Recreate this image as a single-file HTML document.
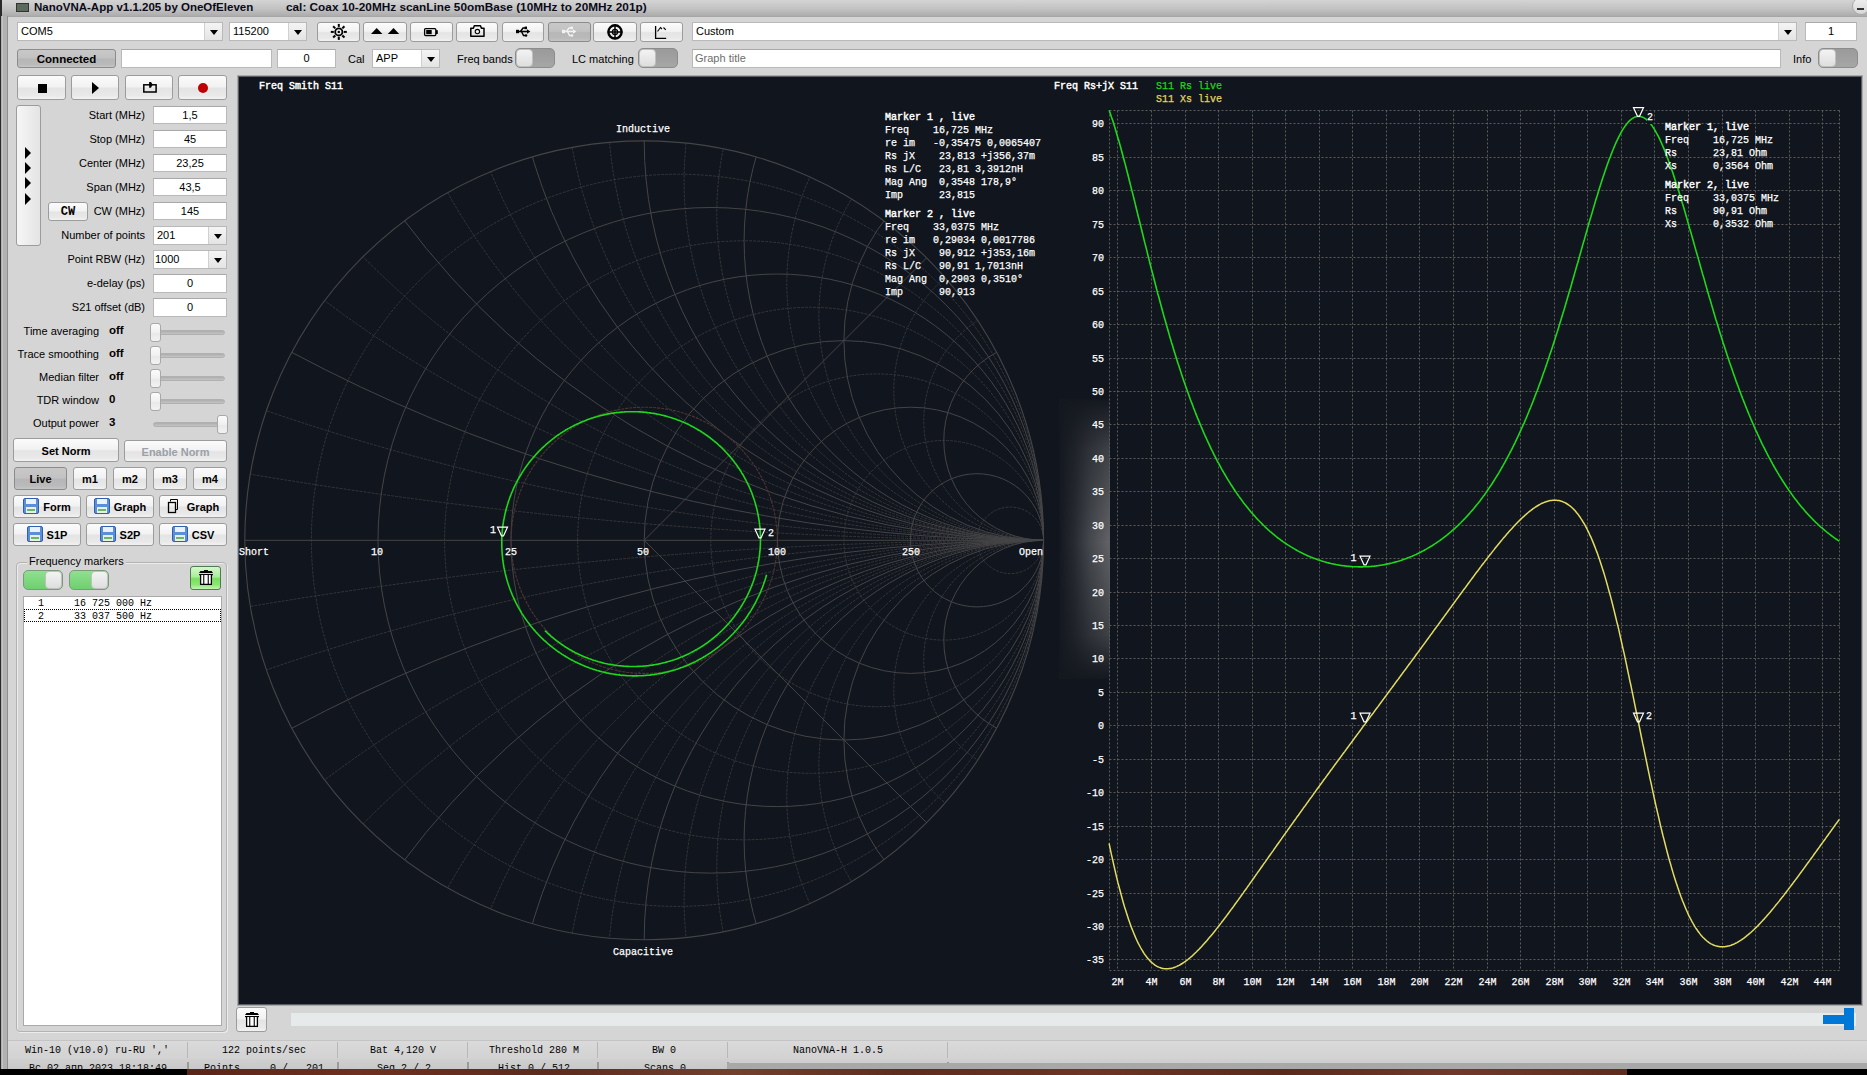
<!DOCTYPE html><html><head><meta charset="utf-8"><style>
*{box-sizing:border-box;margin:0;padding:0}
html,body{width:1867px;height:1075px;overflow:hidden;background:#000}
body{position:relative;font-family:"Liberation Sans",sans-serif;font-size:11px;color:#000}
.a{position:absolute}
.mono{font-family:"Liberation Mono",monospace}
.ct{-webkit-text-stroke:0.25px currentColor}
.btn{position:absolute;border:1px solid #9c9c9c;border-radius:3px;background:linear-gradient(#fbfbfb,#f2f2f2 46%,#e4e4e4 54%,#e9e9e9 85%,#f2f2f2);text-align:center;font-weight:bold;color:#000;padding-top:1px}
.btnp{position:absolute;border:1px solid #8c8c8c;border-radius:3px;background:linear-gradient(#c8c8c8,#c2c2c2 46%,#b6b6b6 54%,#bababa 85%,#c6c6c6);text-align:center;font-weight:bold;padding-top:1px}
.ed{position:absolute;background:#fff;border:1px solid #b9b9b9;border-top-color:#a8a8a8}
.cb{position:absolute;background:#fff;border:1px solid #b9b9b9}
.cb .dd{position:absolute;right:0;top:0;bottom:0;width:18px;border-left:1px solid #d0d0d0;background:linear-gradient(#f4f4f4,#e4e4e4)}
.cb .dd:after{content:"";position:absolute;left:5px;top:7px;border-left:4px solid transparent;border-right:4px solid transparent;border-top:5px solid #000}
.lbl{position:absolute;white-space:nowrap}
.tg{position:absolute;border:1px solid #8c8c8c;border-radius:5px;background:linear-gradient(#9a9a9a,#a6a6a6)}
.tg .k{position:absolute;left:0;top:0;bottom:0;width:46%;border-radius:4px;background:linear-gradient(#f3f3f3,#dedede);border:1px solid #c0c0c0}
.sl .tr{position:absolute;height:4px;border-radius:2px;background:#c4c4c4;border:1px solid #b8b8b8}
.thumb{position:absolute;border:1px solid #a8a8a8;border-radius:3px;background:linear-gradient(90deg,#f8f8f8,#e6e6e6)}
</style></head><body><div class="a" style="left:0px;top:0px;width:1867px;height:1075px;background:#000"></div>
<div class="a" style="left:187px;top:1068px;width:1440px;height:7px;background:linear-gradient(90deg,#6a2a1c,#7a3422 30%,#6b2b1d 60%,#7c3a26)"></div>
<div class="a" style="left:0px;top:0px;width:1867px;height:1069px;background:#d5d5d5"></div>
<div class="a" style="left:0px;top:0px;width:2px;height:1069px;background:#2a2a2a"></div>
<div class="a" style="left:1px;top:16px;width:6px;height:1053px;background:#b1b1b1"></div>
<div class="a" style="left:2px;top:16px;width:1px;height:1053px;background:#c4c4c4"></div>
<div class="a" style="left:2px;top:0px;width:1865px;height:16px;background:linear-gradient(#d4d4d4,#c0c0c0 60%,#acacac)"></div>
<div class="a" style="left:7px;top:16px;width:1860px;height:1px;background:#a6a6a6"></div>
<div class="a" style="left:7px;top:16px;width:1px;height:1053px;background:#8e8e8e"></div>
<div class="a" style="left:16px;top:3px;width:13px;height:9px;background:#5c6a5c;border:1px solid #333"></div>
<div class="lbl" style="left:34px;top:-1px;font-size:11.5px;font-weight:bold;color:#0a0a18;line-height:16px">NanoVNA-App v1.1.205 by OneOfEleven</div>
<div class="lbl" style="left:286px;top:-1px;font-size:11.8px;font-weight:bold;color:#0a0a18;line-height:16px">cal: Coax 10-20MHz scanLine 50omBase (10MHz to 20MHz 201p)</div>
<div class="a" style="left:1852px;top:-3px;width:18px;height:18px;border-radius:9px;background:linear-gradient(#f0f0f0,#d8d8d8);border:1px solid #aaa"></div>
<div class="a" style="left:1857px;top:8px;width:7px;height:2px;background:#333"></div>
<div class="cb" style="left:17px;top:22px;width:206px;height:19px;"><div class="lbl" style="left:3px;top:0;line-height:17px">COM5</div><div class="dd" style="width:18px"></div></div>
<div class="cb" style="left:229px;top:22px;width:78px;height:19px;"><div class="lbl" style="left:3px;top:0;line-height:17px">115200</div><div class="dd" style="width:18px"></div></div>
<div class="btn" style="left:317px;top:22px;width:43px;height:20px;line-height:18px;"></div>
<div class="btn" style="left:363px;top:22px;width:44px;height:20px;line-height:18px;"></div>
<div class="btn" style="left:410px;top:22px;width:43px;height:20px;line-height:18px;"></div>
<div class="btn" style="left:456px;top:22px;width:42px;height:20px;line-height:18px;"></div>
<div class="btn" style="left:502px;top:22px;width:42px;height:20px;line-height:18px;"></div>
<div class="btnp" style="left:548px;top:22px;width:43px;height:20px;line-height:18px;"></div>
<div class="btn" style="left:593px;top:22px;width:44px;height:20px;line-height:18px;"></div>
<div class="btn" style="left:640px;top:22px;width:43px;height:20px;line-height:18px;"></div>
<svg class="a" style="left:0;top:0" width="700" height="50"><g transform="translate(338.8,31.9)" stroke="#000" fill="none"><circle r="3.6" stroke-width="1.8"/><circle r="1.2" fill="#000" stroke="none"/><line x1="0" y1="-5" x2="0" y2="-8" stroke-width="2" transform="rotate(0)"/><line x1="0" y1="-5" x2="0" y2="-8" stroke-width="2" transform="rotate(45)"/><line x1="0" y1="-5" x2="0" y2="-8" stroke-width="2" transform="rotate(90)"/><line x1="0" y1="-5" x2="0" y2="-8" stroke-width="2" transform="rotate(135)"/><line x1="0" y1="-5" x2="0" y2="-8" stroke-width="2" transform="rotate(180)"/><line x1="0" y1="-5" x2="0" y2="-8" stroke-width="2" transform="rotate(225)"/><line x1="0" y1="-5" x2="0" y2="-8" stroke-width="2" transform="rotate(270)"/><line x1="0" y1="-5" x2="0" y2="-8" stroke-width="2" transform="rotate(315)"/></g><path d="M371 33.9L376.7 27.9L382.4 33.9Z M387.8 33.9L393.5 27.9L399.2 33.9Z" fill="#000"/><rect x="424.6" y="28.6" width="11.2" height="7" rx="1" fill="none" stroke="#000" stroke-width="1.3"/><rect x="426.2" y="30" width="5.5" height="4.2" fill="#000"/><rect x="436" y="30.2" width="1.8" height="3.8" fill="#000"/><path d="M470.8 28.2h2.6l0.9-2.4h6.2l0.9 2.4h2.6v8.1h-13.2z" fill="none" stroke="#000" stroke-width="1.5" stroke-linejoin="round"/><circle cx="477.4" cy="31.6" r="2.2" fill="none" stroke="#000" stroke-width="1.1"/><g transform="translate(0,0)" fill="#000" stroke="#000"><path d="M517 31.5H528" stroke-width="1.6"/><rect x="516" y="29.8" width="3" height="3.4" stroke="none"/><path d="M527 29.2L530.4 31.5L527 33.8Z" stroke="none"/><path d="M520.5 31.5L523 28L525 28" stroke-width="1.4" fill="none"/><rect x="524.6" y="26.6" width="2.4" height="2.6" stroke="none"/><path d="M521.5 31.5L523.5 35.5L525 35.5" stroke-width="1.4" fill="none"/><circle cx="526" cy="35.5" r="1.3" stroke="none"/></g><g transform="translate(46,0)" fill="#f2f2f2" stroke="#f2f2f2"><path d="M517 31.5H528" stroke-width="1.6"/><rect x="516" y="29.8" width="3" height="3.4" stroke="none"/><path d="M527 29.2L530.4 31.5L527 33.8Z" stroke="none"/><path d="M520.5 31.5L523 28L525 28" stroke-width="1.4" fill="none"/><rect x="524.6" y="26.6" width="2.4" height="2.6" stroke="none"/><path d="M521.5 31.5L523.5 35.5L525 35.5" stroke-width="1.4" fill="none"/><circle cx="526" cy="35.5" r="1.3" stroke="none"/></g><circle cx="615" cy="31.9" r="6.6" fill="none" stroke="#000" stroke-width="2.4"/><circle cx="615" cy="31.9" r="2.6" fill="none" stroke="#000" stroke-width="1.2"/><path d="M615 24.5V39.3M607.6 31.9H622.4" stroke="#000" stroke-width="1.5"/><path d="M655.6 26V38.4H666.2" fill="none" stroke="#000" stroke-width="1.3"/><path d="M657.5 31.5L660.5 27.5L662 29 M663.5 27.5L665.8 29.8" fill="none" stroke="#000" stroke-width="1.1"/></svg>
<div class="cb" style="left:692px;top:22px;width:1105px;height:19px;"><div class="lbl" style="left:3px;top:0;line-height:17px">Custom</div><div class="dd" style="width:18px"></div></div>
<div class="ed" style="left:1805px;top:22px;width:52px;height:19px;text-align:center;line-height:17px;color:#000;padding-left:0px">1</div>
<div class="btnp" style="left:17px;top:49px;width:99px;height:19px;line-height:17px;font-size:11.5px;">Connected</div>
<div class="ed" style="left:121px;top:49px;width:151px;height:19px;text-align:center;line-height:17px;color:#000;padding-left:0px"></div>
<div class="ed" style="left:277px;top:49px;width:59px;height:19px;text-align:center;line-height:17px;color:#000;padding-left:0px">0</div>
<div class="lbl" style="left:348px;top:52px;line-height:14px">Cal</div>
<div class="cb" style="left:372px;top:49px;width:68px;height:19px;"><div class="lbl" style="left:3px;top:0;line-height:17px">APP</div><div class="dd" style="width:18px"></div></div>
<div class="lbl" style="left:457px;top:52px;line-height:14px">Freq bands</div>
<div class="tg" style="left:515px;top:48px;width:40px;height:20px;"><div class="k"></div></div>
<div class="lbl" style="left:572px;top:52px;line-height:14px">LC matching</div>
<div class="tg" style="left:638px;top:48px;width:40px;height:20px;"><div class="k"></div></div>
<div class="ed" style="left:692px;top:49px;width:1089px;height:19px;text-align:left;line-height:17px;color:#6d6d6d;padding-left:2px">Graph title</div>
<div class="lbl" style="left:1793px;top:52px;line-height:14px">Info</div>
<div class="tg" style="left:1818px;top:48px;width:40px;height:20px;"><div class="k"></div></div>
<div class="btn" style="left:17px;top:75px;width:49px;height:25px;line-height:23px;"><div class="a" style="left:20px;top:8px;width:9px;height:9px;background:#000"></div></div>
<div class="btn" style="left:71px;top:75px;width:48px;height:25px;line-height:23px;"><div class="a" style="left:20px;top:6px;border-top:6px solid transparent;border-bottom:6px solid transparent;border-left:7px solid #000"></div></div>
<div class="btn" style="left:125px;top:75px;width:48px;height:25px;line-height:23px;"><svg class="a" style="left:-126px;top:-76px" width="200" height="120"><rect x="143.8" y="84.8" width="12.3" height="7.2" fill="none" stroke="#000" stroke-width="1.5"/><path d="M149.1 82H151L152.6 84.5L151 87.7H149.1Z" fill="#000"/></svg></div>
<div class="btn" style="left:178px;top:75px;width:49px;height:25px;line-height:23px;"><div class="a" style="left:19px;top:7px;width:10px;height:10px;border-radius:5px;background:#c00000"></div></div>
<div class="btn" style="left:16px;top:105px;width:25px;height:141px;background:linear-gradient(90deg,#f6f6f6,#e4e4e4)"></div>
<div class="a" style="left:25px;top:147px;border-top:6px solid transparent;border-bottom:6px solid transparent;border-left:6px solid #000"></div>
<div class="a" style="left:25px;top:162px;border-top:6px solid transparent;border-bottom:6px solid transparent;border-left:6px solid #000"></div>
<div class="a" style="left:25px;top:177px;border-top:6px solid transparent;border-bottom:6px solid transparent;border-left:6px solid #000"></div>
<div class="a" style="left:25px;top:193px;border-top:6px solid transparent;border-bottom:6px solid transparent;border-left:6px solid #000"></div>
<div class="lbl" style="right:1722px;top:108px;line-height:14px">Start (MHz)</div>
<div class="ed" style="left:153px;top:106px;width:74px;height:18px;text-align:center;line-height:16px;color:#000;padding-left:0px">1,5</div>
<div class="lbl" style="right:1722px;top:132px;line-height:14px">Stop (MHz)</div>
<div class="ed" style="left:153px;top:130px;width:74px;height:18px;text-align:center;line-height:16px;color:#000;padding-left:0px">45</div>
<div class="lbl" style="right:1722px;top:156px;line-height:14px">Center (MHz)</div>
<div class="ed" style="left:153px;top:154px;width:74px;height:18px;text-align:center;line-height:16px;color:#000;padding-left:0px">23,25</div>
<div class="lbl" style="right:1722px;top:180px;line-height:14px">Span (MHz)</div>
<div class="ed" style="left:153px;top:178px;width:74px;height:18px;text-align:center;line-height:16px;color:#000;padding-left:0px">43,5</div>
<div class="lbl" style="right:1722px;top:204px;line-height:14px">CW (MHz)</div>
<div class="ed" style="left:153px;top:202px;width:74px;height:18px;text-align:center;line-height:16px;color:#000;padding-left:0px">145</div>
<div class="btn" style="left:48px;top:202px;width:40px;height:19px;line-height:17px;font-family:Liberation Mono;font-size:12px;">CW</div>
<div class="lbl" style="right:1722px;top:228px;line-height:14px">Number of points</div>
<div class="cb" style="left:153px;top:226px;width:74px;height:19px;"><div class="lbl" style="left:3px;top:0;line-height:17px">201</div><div class="dd" style="width:18px"></div></div>
<div class="lbl" style="right:1722px;top:252px;line-height:14px">Point RBW (Hz)</div>
<div class="cb" style="left:153px;top:250px;width:74px;height:19px;"><div class="lbl" style="left:1px;top:0;line-height:17px">1000</div><div class="dd" style="width:18px"></div></div>
<div class="lbl" style="right:1722px;top:276px;line-height:14px">e-delay (ps)</div>
<div class="ed" style="left:153px;top:274px;width:74px;height:19px;text-align:center;line-height:17px;color:#000;padding-left:0px">0</div>
<div class="lbl" style="right:1722px;top:300px;line-height:14px">S21 offset (dB)</div>
<div class="ed" style="left:153px;top:298px;width:74px;height:19px;text-align:center;line-height:17px;color:#000;padding-left:0px">0</div>
<div class="lbl" style="right:1768px;top:324px;line-height:14px">Time averaging</div>
<div class="lbl" style="left:109px;top:323px;line-height:14px;font-weight:bold;font-size:11.5px">off</div>
<div class="a" style="left:153px;top:330px;width:72px;height:5px;border-radius:3px;background:linear-gradient(#adadad,#c4c4c4);border:1px solid #b0b0b0"></div>
<div class="thumb" style="left:150px;top:322.5px;width:11px;height:19px;background:linear-gradient(#fbfbfb,#f0f0f0 50%,#e8e8e8 52%,#f2f2f2)"></div>
<div class="lbl" style="right:1768px;top:347px;line-height:14px">Trace smoothing</div>
<div class="lbl" style="left:109px;top:346px;line-height:14px;font-weight:bold;font-size:11.5px">off</div>
<div class="a" style="left:153px;top:353px;width:72px;height:5px;border-radius:3px;background:linear-gradient(#adadad,#c4c4c4);border:1px solid #b0b0b0"></div>
<div class="thumb" style="left:150px;top:345.5px;width:11px;height:19px;background:linear-gradient(#fbfbfb,#f0f0f0 50%,#e8e8e8 52%,#f2f2f2)"></div>
<div class="lbl" style="right:1768px;top:370px;line-height:14px">Median filter</div>
<div class="lbl" style="left:109px;top:369px;line-height:14px;font-weight:bold;font-size:11.5px">off</div>
<div class="a" style="left:153px;top:376px;width:72px;height:5px;border-radius:3px;background:linear-gradient(#adadad,#c4c4c4);border:1px solid #b0b0b0"></div>
<div class="thumb" style="left:150px;top:368.5px;width:11px;height:19px;background:linear-gradient(#fbfbfb,#f0f0f0 50%,#e8e8e8 52%,#f2f2f2)"></div>
<div class="lbl" style="right:1768px;top:393px;line-height:14px">TDR window</div>
<div class="lbl" style="left:109px;top:392px;line-height:14px;font-weight:bold;font-size:11.5px">0</div>
<div class="a" style="left:153px;top:399px;width:72px;height:5px;border-radius:3px;background:linear-gradient(#adadad,#c4c4c4);border:1px solid #b0b0b0"></div>
<div class="thumb" style="left:150px;top:391.5px;width:11px;height:19px;background:linear-gradient(#fbfbfb,#f0f0f0 50%,#e8e8e8 52%,#f2f2f2)"></div>
<div class="lbl" style="right:1768px;top:416px;line-height:14px">Output power</div>
<div class="lbl" style="left:109px;top:415px;line-height:14px;font-weight:bold;font-size:11.5px">3</div>
<div class="a" style="left:153px;top:422px;width:72px;height:5px;border-radius:3px;background:linear-gradient(#adadad,#c4c4c4);border:1px solid #b0b0b0"></div>
<div class="thumb" style="left:217px;top:414.5px;width:11px;height:19px;background:linear-gradient(#fbfbfb,#f0f0f0 50%,#e8e8e8 52%,#f2f2f2)"></div>
<div class="btn" style="left:13px;top:438px;width:106px;height:24px;line-height:22px;">Set Norm</div>
<div class="btn" style="left:124px;top:440px;width:103px;height:22px;line-height:20px;color:#9aa0a8;">Enable Norm</div>
<div class="btnp" style="left:14px;top:467px;width:53px;height:23px;line-height:21px;">Live</div>
<div class="btn" style="left:73px;top:467px;width:34px;height:23px;line-height:21px;">m1</div>
<div class="btn" style="left:113px;top:467px;width:34px;height:23px;line-height:21px;">m2</div>
<div class="btn" style="left:153px;top:467px;width:34px;height:23px;line-height:21px;">m3</div>
<div class="btn" style="left:193px;top:467px;width:34px;height:23px;line-height:21px;">m4</div>
<div class="btn" style="left:13px;top:495px;width:68px;height:23px;line-height:21px;"><svg width="16" height="16" style="vertical-align:-3px;margin-right:4px"><rect x="0.5" y="0.5" width="15" height="15" rx="1.5" fill="#5b8fd8" stroke="#2f5fae"/><rect x="3" y="1" width="10" height="5" fill="#eaf2ff"/><rect x="3" y="9" width="10" height="6" fill="#e6f0e6"/><rect x="4" y="11" width="8" height="2" fill="#6bb56b"/></svg>Form</div>
<div class="btn" style="left:86px;top:495px;width:68px;height:23px;line-height:21px;"><svg width="16" height="16" style="vertical-align:-3px;margin-right:4px"><rect x="0.5" y="0.5" width="15" height="15" rx="1.5" fill="#5b8fd8" stroke="#2f5fae"/><rect x="3" y="1" width="10" height="5" fill="#eaf2ff"/><rect x="3" y="9" width="10" height="6" fill="#e6f0e6"/><rect x="4" y="11" width="8" height="2" fill="#6bb56b"/></svg>Graph</div>
<div class="btn" style="left:159px;top:495px;width:68px;height:23px;line-height:21px;"><svg width="14" height="16" style="vertical-align:-3px;margin-right:6px"><path d="M3.5 3.5V1.5h7v10h-2" fill="none" stroke="#000"/><rect x="1.5" y="4.5" width="7" height="10" fill="none" stroke="#000" stroke-width="1.3"/></svg>Graph</div>
<div class="btn" style="left:13px;top:523px;width:68px;height:23px;line-height:21px;"><svg width="16" height="16" style="vertical-align:-3px;margin-right:4px"><rect x="0.5" y="0.5" width="15" height="15" rx="1.5" fill="#5b8fd8" stroke="#2f5fae"/><rect x="3" y="1" width="10" height="5" fill="#eaf2ff"/><rect x="3" y="9" width="10" height="6" fill="#e6f0e6"/><rect x="4" y="11" width="8" height="2" fill="#6bb56b"/></svg>S1P</div>
<div class="btn" style="left:86px;top:523px;width:68px;height:23px;line-height:21px;"><svg width="16" height="16" style="vertical-align:-3px;margin-right:4px"><rect x="0.5" y="0.5" width="15" height="15" rx="1.5" fill="#5b8fd8" stroke="#2f5fae"/><rect x="3" y="1" width="10" height="5" fill="#eaf2ff"/><rect x="3" y="9" width="10" height="6" fill="#e6f0e6"/><rect x="4" y="11" width="8" height="2" fill="#6bb56b"/></svg>S2P</div>
<div class="btn" style="left:159px;top:523px;width:68px;height:23px;line-height:21px;"><svg width="16" height="16" style="vertical-align:-3px;margin-right:4px"><rect x="0.5" y="0.5" width="15" height="15" rx="1.5" fill="#5b8fd8" stroke="#2f5fae"/><rect x="3" y="1" width="10" height="5" fill="#eaf2ff"/><rect x="3" y="9" width="10" height="6" fill="#e6f0e6"/><rect x="4" y="11" width="8" height="2" fill="#6bb56b"/></svg>CSV</div>
<div class="a" style="left:16px;top:562px;width:211px;height:470px;border:1px solid #b3b3b3;border-radius:4px;box-shadow:inset 1px 1px 0 #ececec,1px 1px 0 #ececec"></div>
<div class="lbl" style="left:27px;top:554px;line-height:14px;background:#d5d5d5;padding:0 2px">Frequency markers</div>
<div class="tg" style="left:23px;top:570px;width:40px;height:20px;background:linear-gradient(#8fe08f,#6fcf6f);border-color:#7a9a7a"><div class="k" style="left:auto;right:0"></div></div>
<div class="tg" style="left:69px;top:570px;width:40px;height:20px;background:linear-gradient(#8fe08f,#6fcf6f);border-color:#7a9a7a"><div class="k" style="left:auto;right:0"></div></div>
<div class="btn" style="left:190px;top:566px;width:31px;height:24px;background:linear-gradient(#d4f8cc,#a8ee98 45%,#78e05c 53%,#8ae872 80%,#c4f4b4);border-color:#4f7a52"><svg class="a" style="left:7px;top:3px" width="17" height="17"><path d="M1 3L2.5 1H6V0H10V1H13.5L15 3Z" fill="#000"/><rect x="1" y="4" width="14" height="1.2" fill="#000"/><rect x="2.6" y="5" width="10.8" height="9.4" fill="#fff"/><path d="M2.6 5V14.4H13.4V5" fill="none" stroke="#000" stroke-width="1.3"/><rect x="5.2" y="5" width="1.1" height="9.5" fill="#000"/><rect x="9.7" y="5" width="1.1" height="9.5" fill="#000"/></svg></div>
<div class="a" style="left:23px;top:596px;width:199px;height:430px;background:#fff;border:1px solid #a9a9a9"></div>
<div class="lbl mono" style="left:38px;top:597px;font-size:10px;line-height:13px;white-space:pre">1     16 725 000 Hz</div>
<div class="a" style="left:24px;top:609px;width:197px;height:13px;border:1px dotted #000"></div>
<div class="lbl mono" style="left:38px;top:610px;font-size:10px;line-height:13px;white-space:pre">2     33 037 500 Hz</div>
<div class="a" style="left:237px;top:75px;width:1626px;height:931px;background:#a9a9a9"></div>
<div class="a" style="left:238px;top:76px;width:1624px;height:929px;background:#5a5d62"></div>
<div class="a" style="left:239px;top:77px;width:1622px;height:927px;background:#11151d"></div>
<div class="a" style="left:1059px;top:399px;width:51px;height:280px;background:#14181f"></div>
<div class="a" style="left:1059px;top:399px;width:51px;height:280px;background:linear-gradient(90deg,rgba(98,100,104,0),rgba(98,100,104,0.25) 30%,rgba(98,100,104,0.65) 62%,rgba(98,100,104,1));-webkit-mask-image:linear-gradient(rgba(0,0,0,0),rgba(0,0,0,0.55) 18%,#000 51%,rgba(0,0,0,0.55) 84%,rgba(0,0,0,0))"></div>
<svg class="a" style="left:0;top:0" width="1867" height="1075"><clipPath id="uc"><circle cx="644.2" cy="540.3" r="399.4"/></clipPath>
<g clip-path="url(#uc)" fill="none">
<g stroke="#36373a" stroke-width="1" stroke-dasharray="2.8 1.2"><circle cx="677.5" cy="540.3" r="366.1"/><circle cx="744.1" cy="540.3" r="299.5"/><circle cx="810.6" cy="540.3" r="233.0"/><circle cx="877.2" cy="540.3" r="166.4"/><circle cx="943.8" cy="540.3" r="99.8"/><circle cx="1010.3" cy="540.3" r="33.3"/><circle cx="1043.6" cy="-4252.5" r="4792.8"/><circle cx="1043.6" cy="5333.1" r="4792.8"/><circle cx="1043.6" cy="-1856.1" r="2396.4"/><circle cx="1043.6" cy="2936.7" r="2396.4"/><circle cx="1043.6" cy="-657.9" r="1198.2"/><circle cx="1043.6" cy="1738.5" r="1198.2"/><circle cx="1043.6" cy="-418.3" r="958.6"/><circle cx="1043.6" cy="1498.9" r="958.6"/><circle cx="1043.6" cy="-144.4" r="684.7"/><circle cx="1043.6" cy="1225.0" r="684.7"/><circle cx="1043.6" cy="-58.8" r="599.1"/><circle cx="1043.6" cy="1139.4" r="599.1"/><circle cx="1043.6" cy="61.0" r="479.3"/><circle cx="1043.6" cy="1019.6" r="479.3"/><circle cx="1043.6" cy="104.6" r="435.7"/><circle cx="1043.6" cy="976.0" r="435.7"/><circle cx="1043.6" cy="180.8" r="359.5"/><circle cx="1043.6" cy="899.8" r="359.5"/><circle cx="1043.6" cy="213.5" r="326.8"/><circle cx="1043.6" cy="867.1" r="326.8"/><circle cx="1043.6" cy="283.5" r="256.8"/><circle cx="1043.6" cy="797.1" r="256.8"/><circle cx="1043.6" cy="315.6" r="224.7"/><circle cx="1043.6" cy="765.0" r="224.7"/><circle cx="1043.6" cy="390.5" r="149.8"/><circle cx="1043.6" cy="690.1" r="149.8"/><circle cx="1043.6" cy="420.5" r="119.8"/><circle cx="1043.6" cy="660.1" r="119.8"/></g>
<g stroke="#454547" stroke-width="1"><circle cx="710.8" cy="540.3" r="332.8"/><circle cx="777.3" cy="540.3" r="266.3"/><circle cx="843.9" cy="540.3" r="199.7"/><circle cx="910.5" cy="540.3" r="133.1"/><circle cx="977.0" cy="540.3" r="66.6"/><circle cx="1043.6" cy="-1057.3" r="1597.6"/><circle cx="1043.6" cy="2137.9" r="1597.6"/><circle cx="1043.6" cy="-258.5" r="798.8"/><circle cx="1043.6" cy="1339.1" r="798.8"/><circle cx="1043.6" cy="7.8" r="532.5"/><circle cx="1043.6" cy="1072.8" r="532.5"/><circle cx="1043.6" cy="140.9" r="399.4"/><circle cx="1043.6" cy="939.7" r="399.4"/><circle cx="1043.6" cy="240.8" r="299.5"/><circle cx="1043.6" cy="839.8" r="299.5"/><circle cx="1043.6" cy="340.6" r="199.7"/><circle cx="1043.6" cy="740.0" r="199.7"/><circle cx="1043.6" cy="440.4" r="99.8"/><circle cx="1043.6" cy="640.1" r="99.8"/><line x1="244.8" y1="540.3" x2="1043.6" y2="540.3"/><line x1="644.2" y1="540.3" x2="926.6" y2="257.9"/><line x1="644.2" y1="540.3" x2="926.6" y2="822.7"/></g>
</g>
<circle cx="644.2" cy="540.3" r="399.4" fill="none" stroke="#454547" stroke-width="1.1"/>
<circle cx="644.2" cy="540.3" r="133.1" fill="none" stroke="#4e3532" stroke-width="1.1" stroke-dasharray="3 1"/><path d="M766.6 574.7 L766.2 576.0 L765.9 577.2 L765.5 578.5 L765.1 579.8 L764.7 581.0 L764.2 582.3 L763.8 583.5 L763.4 584.7 L762.9 586.0 L762.5 587.2 L762.0 588.4 L761.5 589.6 L761.0 590.8 L760.5 592.1 L760.0 593.3 L759.4 594.5 L758.9 595.6 L758.3 596.8 L757.8 598.0 L757.2 599.2 L756.6 600.3 L756.0 601.5 L755.4 602.7 L754.8 603.8 L754.2 604.9 L753.6 606.1 L752.9 607.2 L752.3 608.3 L751.6 609.4 L750.9 610.6 L750.2 611.7 L749.5 612.7 L748.8 613.8 L748.1 614.9 L747.4 616.0 L746.7 617.0 L745.9 618.1 L745.2 619.2 L744.4 620.2 L743.6 621.2 L742.9 622.3 L742.1 623.3 L741.3 624.3 L740.5 625.3 L739.6 626.3 L738.8 627.3 L738.0 628.3 L737.1 629.2 L736.3 630.2 L735.4 631.1 L734.6 632.1 L733.7 633.0 L732.8 634.0 L731.9 634.9 L731.0 635.8 L730.1 636.7 L729.2 637.6 L728.3 638.5 L727.3 639.3 L726.4 640.2 L725.5 641.1 L724.5 641.9 L723.5 642.7 L722.6 643.6 L721.6 644.4 L720.6 645.2 L719.6 646.0 L718.6 646.8 L717.6 647.6 L716.6 648.4 L715.6 649.1 L714.6 649.9 L713.5 650.6 L712.5 651.3 L711.5 652.1 L710.4 652.8 L709.4 653.5 L708.3 654.2 L707.2 654.9 L706.2 655.5 L705.1 656.2 L704.0 656.8 L702.9 657.5 L701.8 658.1 L700.7 658.7 L699.6 659.3 L698.5 659.9 L697.4 660.5 L696.3 661.1 L695.1 661.7 L694.0 662.2 L692.9 662.8 L691.7 663.3 L690.6 663.8 L689.4 664.3 L688.3 664.9 L687.1 665.3 L686.0 665.8 L684.8 666.3 L683.6 666.8 L682.5 667.2 L681.3 667.6 L680.1 668.1 L678.9 668.5 L677.8 668.9 L676.6 669.3 L675.4 669.7 L674.2 670.0 L673.0 670.4 L671.8 670.7 L670.6 671.1 L669.4 671.4 L668.2 671.7 L666.9 672.0 L665.7 672.3 L664.5 672.6 L663.3 672.9 L662.1 673.1 L660.9 673.4 L659.6 673.6 L658.4 673.8 L657.2 674.0 L655.9 674.2 L654.7 674.4 L653.5 674.6 L652.3 674.8 L651.0 674.9 L649.8 675.1 L648.5 675.2 L647.3 675.3 L646.1 675.4 L644.8 675.5 L643.6 675.6 L642.4 675.7 L641.1 675.7 L639.9 675.8 L638.6 675.8 L637.4 675.9 L636.2 675.9 L634.9 675.9 L633.7 675.9 L632.4 675.9 L631.2 675.8 L630.0 675.8 L628.7 675.7 L627.5 675.7 L626.3 675.6 L625.0 675.5 L623.8 675.4 L622.6 675.3 L621.3 675.2 L620.1 675.1 L618.9 674.9 L617.7 674.8 L616.4 674.6 L615.2 674.4 L614.0 674.2 L612.8 674.0 L611.6 673.8 L610.4 673.6 L609.2 673.4 L607.9 673.1 L606.7 672.9 L605.5 672.6 L604.3 672.3 L603.1 672.0 L602.0 671.8 L600.8 671.4 L599.6 671.1 L598.4 670.8 L597.2 670.5 L596.0 670.1 L594.9 669.7 L593.7 669.4 L592.5 669.0 L591.4 668.6 L590.2 668.2 L589.1 667.8 L587.9 667.3 L586.8 666.9 L585.6 666.5 L584.5 666.0 L583.3 665.5 L582.2 665.1 L581.1 664.6 L580.0 664.1 L578.9 663.6 L577.8 663.0 L576.6 662.5 L575.5 662.0 L574.5 661.4 L573.4 660.9 L572.3 660.3 L571.2 659.7 L570.1 659.1 L569.1 658.5 L568.0 657.9 L567.0 657.3 L565.9 656.7 L564.9 656.0 L563.8 655.4 L562.8 654.7 L561.8 654.1 L560.8 653.4 L559.7 652.7 L558.7 652.0 L557.7 651.3 L556.7 650.6 L555.8 649.9 L554.8 649.2 L553.8 648.4 L552.8 647.7 L551.9 646.9 L550.9 646.2 L550.0 645.4 L549.1 644.6 L548.1 643.8 L547.2 643.0 L546.3 642.2 L545.4 641.4 L544.5 640.6 L543.6 639.8 L542.7 638.9 L541.8 638.1 L541.0 637.2 L540.1 636.4 L539.3 635.5 L538.4 634.6 L537.6 633.7 L536.8 632.9 L535.9 632.0 L535.1 631.0 L534.3 630.1 L533.5 629.2 L532.7 628.3 L532.0 627.4 L531.2 626.4 L530.4 625.5 L529.7 624.5 L529.0 623.5 L528.2 622.6 L527.5 621.6 L526.8 620.6 L526.1 619.6 L525.4 618.6 L524.7 617.6 L524.0 616.6 L523.4 615.6 L522.7 614.6 L522.0 613.6 L521.4 612.6 L520.8 611.5 L520.2 610.5 L519.5 609.4 L518.9 608.4 L518.3 607.3 L517.8 606.3 L517.2 605.2 L516.6 604.1 L516.1 603.0 L515.5 602.0 L515.0 600.9 L514.5 599.8 L514.0 598.7 L513.5 597.6 L513.0 596.5 L512.5 595.4 L512.0 594.2 L511.6 593.1 L511.1 592.0 L510.7 590.9 L510.2 589.8 L509.8 588.6 L509.4 587.5 L509.0 586.3 L508.6 585.2 L508.2 584.0 L507.9 582.9 L507.5 581.7 L507.2 580.6 L506.8 579.4 L506.5 578.3 L506.2 577.1 L505.9 575.9 L505.6 574.7 L505.3 573.6 L505.0 572.4 L504.8 571.2 L504.5 570.0 L504.3 568.9 L504.0 567.7 L503.8 566.5 L503.6 565.3 L503.4 564.1 L503.2 562.9 L503.1 561.7 L502.9 560.5 L502.7 559.3 L502.6 558.1 L502.5 556.9 L502.4 555.7 L502.2 554.5 L502.1 553.3 L502.1 552.1 L502.0 550.9 L501.9 549.7 L501.9 548.5 L501.8 547.3 L501.8 546.1 L501.8 544.9 L501.8 543.7 L501.8 542.5 L501.8 541.3 L501.8 540.1 L501.8 538.9 L501.9 537.7 L501.9 536.5 L502.0 535.3 L502.1 534.1 L502.2 532.8 L502.2 531.6 L502.4 530.5 L502.5 529.3 L502.6 528.1 L502.8 526.9 L502.9 525.7 L503.1 524.5 L503.2 523.3 L503.4 522.1 L503.6 520.9 L503.8 519.7 L504.1 518.5 L504.3 517.4 L504.5 516.2 L504.8 515.0 L505.0 513.8 L505.3 512.7 L505.6 511.5 L505.9 510.3 L506.2 509.2 L506.5 508.0 L506.8 506.8 L507.2 505.7 L507.5 504.5 L507.9 503.4 L508.2 502.2 L508.6 501.1 L509.0 500.0 L509.4 498.8 L509.8 497.7 L510.2 496.6 L510.7 495.4 L511.1 494.3 L511.5 493.2 L512.0 492.1 L512.5 491.0 L512.9 489.9 L513.4 488.8 L513.9 487.7 L514.4 486.6 L515.0 485.5 L515.5 484.4 L516.0 483.4 L516.6 482.3 L517.1 481.2 L517.7 480.2 L518.3 479.1 L518.9 478.1 L519.5 477.0 L520.1 476.0 L520.7 475.0 L521.3 474.0 L521.9 472.9 L522.6 471.9 L523.2 470.9 L523.9 469.9 L524.6 468.9 L525.2 467.9 L525.9 466.9 L526.6 466.0 L527.3 465.0 L528.1 464.0 L528.8 463.1 L529.5 462.1 L530.2 461.2 L531.0 460.2 L531.8 459.3 L532.5 458.4 L533.3 457.5 L534.1 456.6 L534.9 455.7 L535.7 454.8 L536.5 453.9 L537.3 453.0 L538.1 452.1 L538.9 451.3 L539.8 450.4 L540.6 449.6 L541.5 448.7 L542.3 447.9 L543.2 447.1 L544.1 446.3 L545.0 445.5 L545.9 444.7 L546.8 443.9 L547.7 443.1 L548.6 442.3 L549.5 441.5 L550.4 440.8 L551.4 440.0 L552.3 439.3 L553.2 438.6 L554.2 437.8 L555.2 437.1 L556.1 436.4 L557.1 435.7 L558.1 435.0 L559.1 434.3 L560.1 433.7 L561.1 433.0 L562.1 432.4 L563.1 431.7 L564.1 431.1 L565.1 430.5 L566.1 429.8 L567.2 429.2 L568.2 428.6 L569.2 428.1 L570.3 427.5 L571.3 426.9 L572.4 426.4 L573.5 425.8 L574.5 425.3 L575.6 424.8 L576.7 424.2 L577.8 423.7 L578.9 423.2 L579.9 422.7 L581.0 422.3 L582.1 421.8 L583.2 421.3 L584.4 420.9 L585.5 420.5 L586.6 420.0 L587.7 419.6 L588.8 419.2 L590.0 418.8 L591.1 418.4 L592.2 418.0 L593.4 417.7 L594.5 417.3 L595.6 417.0 L596.8 416.7 L597.9 416.3 L599.1 416.0 L600.2 415.7 L601.4 415.4 L602.6 415.1 L603.7 414.9 L604.9 414.6 L606.1 414.4 L607.2 414.1 L608.4 413.9 L609.6 413.7 L610.8 413.5 L611.9 413.3 L613.1 413.1 L614.3 412.9 L615.5 412.8 L616.7 412.6 L617.8 412.5 L619.0 412.4 L620.2 412.2 L621.4 412.1 L622.6 412.0 L623.8 412.0 L625.0 411.9 L626.2 411.8 L627.4 411.8 L628.6 411.7 L629.7 411.7 L630.9 411.7 L632.1 411.7 L633.3 411.7 L634.5 411.7 L635.7 411.7 L636.9 411.8 L638.1 411.8 L639.3 411.9 L640.5 411.9 L641.7 412.0 L642.9 412.1 L644.0 412.2 L645.2 412.3 L646.4 412.4 L647.6 412.6 L648.8 412.7 L650.0 412.9 L651.1 413.1 L652.3 413.2 L653.5 413.4 L654.7 413.6 L655.9 413.8 L657.0 414.1 L658.2 414.3 L659.4 414.5 L660.5 414.8 L661.7 415.1 L662.8 415.3 L664.0 415.6 L665.2 415.9 L666.3 416.2 L667.5 416.5 L668.6 416.9 L669.7 417.2 L670.9 417.6 L672.0 417.9 L673.1 418.3 L674.3 418.7 L675.4 419.1 L676.5 419.5 L677.6 419.9 L678.8 420.3 L679.9 420.8 L681.0 421.2 L682.1 421.7 L683.2 422.1 L684.3 422.6 L685.3 423.1 L686.4 423.6 L687.5 424.1 L688.6 424.6 L689.7 425.1 L690.7 425.7 L691.8 426.2 L692.8 426.8 L693.9 427.3 L694.9 427.9 L696.0 428.5 L697.0 429.1 L698.0 429.7 L699.0 430.3 L700.1 430.9 L701.1 431.5 L702.1 432.2 L703.1 432.8 L704.1 433.5 L705.1 434.2 L706.0 434.8 L707.0 435.5 L708.0 436.2 L708.9 436.9 L709.9 437.6 L710.8 438.4 L711.8 439.1 L712.7 439.8 L713.6 440.6 L714.6 441.3 L715.5 442.1 L716.4 442.9 L717.3 443.7 L718.2 444.5 L719.0 445.3 L719.9 446.1 L720.8 446.9 L721.6 447.7 L722.5 448.5 L723.3 449.4 L724.2 450.2 L725.0 451.1 L725.8 452.0 L726.6 452.8 L727.4 453.7 L728.2 454.6 L729.0 455.5 L729.8 456.4 L730.6 457.3 L731.3 458.2 L732.1 459.1 L732.8 460.1 L733.6 461.0 L734.3 461.9 L735.0 462.9 L735.7 463.8 L736.4 464.8 L737.1 465.8 L737.8 466.8 L738.5 467.7 L739.2 468.7 L739.8 469.7 L740.5 470.7 L741.1 471.7 L741.7 472.8 L742.3 473.8 L743.0 474.8 L743.6 475.8 L744.1 476.9 L744.7 477.9 L745.3 479.0 L745.9 480.0 L746.4 481.1 L746.9 482.1 L747.5 483.2 L748.0 484.3 L748.5 485.3 L749.0 486.4 L749.5 487.5 L750.0 488.6 L750.4 489.7 L750.9 490.8 L751.4 491.9 L751.8 493.0 L752.2 494.1 L752.6 495.3 L753.0 496.4 L753.4 497.5 L753.8 498.6 L754.2 499.8 L754.6 500.9 L754.9 502.0 L755.3 503.2 L755.6 504.3 L755.9 505.5 L756.2 506.6 L756.5 507.8 L756.8 508.9 L757.1 510.1 L757.4 511.3 L757.6 512.4 L757.9 513.6 L758.1 514.8 L758.3 516.0 L758.5 517.1 L758.7 518.3 L758.9 519.5 L759.1 520.7 L759.3 521.8 L759.4 523.0 L759.6 524.2 L759.7 525.4 L759.9 526.6 L760.0 527.8 L760.1 529.0 L760.2 530.2 L760.2 531.4 L760.3 532.6 L760.4 533.8 L760.4 534.9 L760.4 536.1 L760.5 537.3 L760.5 538.5 L760.5 539.7 L760.5 540.9 L760.4 542.1 L760.4 543.3 L760.4 544.5 L760.3 545.7 L760.2 546.9 L760.2 548.1 L760.1 549.3 L760.0 550.5 L759.9 551.7 L759.7 552.9 L759.6 554.1 L759.5 555.2 L759.3 556.4 L759.1 557.6 L759.0 558.8 L758.8 560.0 L758.6 561.2 L758.4 562.3 L758.1 563.5 L757.9 564.7 L757.7 565.9 L757.4 567.0 L757.1 568.2 L756.9 569.4 L756.6 570.5 L756.3 571.7 L756.0 572.9 L755.6 574.0 L755.3 575.2 L755.0 576.3 L754.6 577.5 L754.2 578.6 L753.9 579.7 L753.5 580.9 L753.1 582.0 L752.7 583.1 L752.2 584.3 L751.8 585.4 L751.4 586.5 L750.9 587.6 L750.5 588.7 L750.0 589.8 L749.5 590.9 L749.0 592.0 L748.5 593.1 L748.0 594.2 L747.5 595.3 L746.9 596.3 L746.4 597.4 L745.8 598.5 L745.3 599.5 L744.7 600.6 L744.1 601.6 L743.5 602.7 L742.9 603.7 L742.3 604.7 L741.7 605.8 L741.0 606.8 L740.4 607.8 L739.8 608.8 L739.1 609.8 L738.4 610.8 L737.7 611.8 L737.0 612.8 L736.3 613.8 L735.6 614.7 L734.9 615.7 L734.2 616.7 L733.5 617.6 L732.7 618.6 L732.0 619.5 L731.2 620.4 L730.4 621.4 L729.6 622.3 L728.9 623.2 L728.1 624.1 L727.2 625.0 L726.4 625.9 L725.6 626.7 L724.8 627.6 L723.9 628.5 L723.1 629.3 L722.2 630.2 L721.4 631.0 L720.5 631.8 L719.6 632.7 L718.7 633.5 L717.8 634.3 L716.9 635.1 L716.0 635.9 L715.1 636.6 L714.2 637.4 L713.2 638.2 L712.3 638.9 L711.4 639.7 L710.4 640.4 L709.4 641.1 L708.5 641.8 L707.5 642.6 L706.5 643.3 L705.5 643.9 L704.5 644.6 L703.5 645.3 L702.5 646.0 L701.5 646.6 L700.5 647.3 L699.5 647.9 L698.4 648.5 L697.4 649.1 L696.3 649.7 L695.3 650.3 L694.2 650.9 L693.2 651.5 L692.1 652.0 L691.0 652.6 L690.0 653.1 L688.9 653.7 L687.8 654.2 L686.7 654.7 L685.6 655.2 L684.5 655.7 L683.4 656.2 L682.3 656.7 L681.2 657.1 L680.1 657.6 L678.9 658.0 L677.8 658.4 L676.7 658.9 L675.5 659.3 L674.4 659.7 L673.3 660.0 L672.1 660.4 L671.0 660.8 L669.8 661.1 L668.6 661.5 L667.5 661.8 L666.3 662.1 L665.2 662.4 L664.0 662.7 L662.8 663.0 L661.6 663.3 L660.5 663.6 L659.3 663.8 L658.1 664.1 L656.9 664.3 L655.7 664.5 L654.5 664.7 L653.4 664.9 L652.2 665.1 L651.0 665.3 L649.8 665.4 L648.6 665.6 L647.4 665.7 L646.2 665.9 L645.0 666.0 L643.8 666.1 L642.6 666.2 L641.4 666.3 L640.2 666.3 L639.0 666.4 L637.7 666.4 L636.5 666.5 L635.3 666.5 L634.1 666.5 L632.9 666.5 L631.7 666.5 L630.5 666.5 L629.3 666.5 L628.1 666.4 L626.9 666.4 L625.7 666.3 L624.5 666.2 L623.3 666.1 L622.1 666.0 L620.9 665.9 L619.7 665.8 L618.5 665.7 L617.3 665.5 L616.1 665.4 L614.9 665.2 L613.7 665.0 L612.5 664.8 L611.3 664.6 L610.1 664.4 L608.9 664.2 L607.8 664.0 L606.6 663.7 L605.4 663.5 L604.2 663.2 L603.1 662.9 L601.9 662.6 L600.7 662.3 L599.6 662.0 L598.4 661.7 L597.2 661.3 L596.1 661.0 L594.9 660.6 L593.8 660.3 L592.6 659.9 L591.5 659.5 L590.4 659.1 L589.2 658.7 L588.1 658.3 L587.0 657.8 L585.9 657.4 L584.8 656.9 L583.6 656.5 L582.5 656.0 L581.4 655.5 L580.3 655.0 L579.3 654.5 L578.2 654.0 L577.1 653.4 L576.0 652.9 L574.9 652.4 L573.9 651.8 L572.8 651.2 L571.8 650.6 L570.7 650.1 L569.7 649.5 L568.6 648.9 L567.6 648.2 L566.6 647.6 L565.6 647.0 L564.6 646.3 L563.6 645.7 L562.6 645.0 L561.6 644.3 L560.6 643.6 L559.6 642.9 L558.6 642.2 L557.7 641.5 L556.7 640.8 L555.8 640.1 L554.8 639.3 L553.9 638.6 L553.0 637.8 L552.0 637.1 L551.1 636.3 L550.2 635.5 L549.3 634.7 L548.4 633.9 L547.5 633.1 L546.7 632.3 L545.8 631.4 L544.9 630.6" fill="none" stroke="#1ed81c" stroke-width="1.6"/><path d="M1117.5 110.5V970.5M1151.5 110.5V970.5M1185.5 110.5V970.5M1218.5 110.5V970.5M1252.5 110.5V970.5M1285.5 110.5V970.5M1319.5 110.5V970.5M1352.5 110.5V970.5M1386.5 110.5V970.5M1419.5 110.5V970.5M1453.5 110.5V970.5M1487.5 110.5V970.5M1520.5 110.5V970.5M1554.5 110.5V970.5M1587.5 110.5V970.5M1621.5 110.5V970.5M1654.5 110.5V970.5M1688.5 110.5V970.5M1722.5 110.5V970.5M1755.5 110.5V970.5M1789.5 110.5V970.5M1822.5 110.5V970.5M1109.5 110.5V970.5M1839.5 110.5V970.5M1109.5 123.5H1839.5M1109.5 157.5H1839.5M1109.5 190.5H1839.5M1109.5 224.5H1839.5M1109.5 257.5H1839.5M1109.5 291.5H1839.5M1109.5 324.5H1839.5M1109.5 358.5H1839.5M1109.5 391.5H1839.5M1109.5 424.5H1839.5M1109.5 458.5H1839.5M1109.5 491.5H1839.5M1109.5 525.5H1839.5M1109.5 558.5H1839.5M1109.5 592.5H1839.5M1109.5 625.5H1839.5M1109.5 658.5H1839.5M1109.5 692.5H1839.5M1109.5 725.5H1839.5M1109.5 759.5H1839.5M1109.5 792.5H1839.5M1109.5 826.5H1839.5M1109.5 859.5H1839.5M1109.5 893.5H1839.5M1109.5 926.5H1839.5M1109.5 959.5H1839.5M1109.5 110.5H1839.5M1109.5 970.5H1839.5" stroke="#5c5c5c" stroke-width="1" stroke-dasharray="2 2" fill="none"/><path d="M1109.1 843.4 L1109.9 847.3 L1110.7 851.1 L1111.5 854.9 L1112.4 858.6 L1113.2 862.3 L1114.0 865.9 L1114.8 869.4 L1115.6 872.9 L1116.4 876.3 L1117.2 879.6 L1118.0 882.9 L1118.9 886.1 L1119.7 889.2 L1120.5 892.3 L1121.3 895.3 L1122.1 898.3 L1122.9 901.2 L1123.7 904.0 L1124.5 906.7 L1125.4 909.4 L1126.2 912.0 L1127.0 914.6 L1127.8 917.0 L1128.6 919.4 L1129.4 921.8 L1130.2 924.1 L1131.0 926.3 L1131.8 928.4 L1132.7 930.5 L1133.5 932.5 L1134.3 934.5 L1135.1 936.4 L1135.9 938.2 L1136.7 940.0 L1137.5 941.7 L1138.3 943.4 L1139.2 945.0 L1140.0 946.5 L1140.8 948.0 L1141.6 949.4 L1142.4 950.7 L1143.2 952.0 L1144.0 953.3 L1144.8 954.5 L1145.7 955.6 L1146.5 956.7 L1147.3 957.7 L1148.1 958.7 L1148.9 959.6 L1149.7 960.5 L1150.5 961.4 L1151.3 962.1 L1152.2 962.9 L1153.0 963.5 L1153.8 964.2 L1154.6 964.8 L1155.4 965.3 L1156.2 965.8 L1157.0 966.3 L1157.8 966.7 L1158.7 967.1 L1159.5 967.4 L1160.3 967.7 L1161.1 968.0 L1161.9 968.2 L1162.7 968.4 L1163.5 968.6 L1164.3 968.7 L1165.2 968.8 L1166.0 968.8 L1166.8 968.8 L1167.6 968.8 L1168.4 968.7 L1169.2 968.6 L1170.0 968.5 L1170.8 968.4 L1171.6 968.2 L1172.5 968.0 L1173.3 967.8 L1174.1 967.5 L1174.9 967.2 L1175.7 966.9 L1176.5 966.6 L1177.3 966.2 L1178.1 965.8 L1179.0 965.4 L1179.8 965.0 L1180.6 964.5 L1181.4 964.0 L1182.2 963.5 L1183.0 963.0 L1183.8 962.5 L1184.6 961.9 L1185.5 961.3 L1186.3 960.7 L1187.1 960.1 L1187.9 959.5 L1188.7 958.8 L1189.5 958.2 L1190.3 957.5 L1191.1 956.8 L1192.0 956.1 L1192.8 955.3 L1193.6 954.6 L1194.4 953.8 L1195.2 953.0 L1196.0 952.3 L1196.8 951.5 L1197.6 950.6 L1198.5 949.8 L1199.3 949.0 L1200.1 948.1 L1200.9 947.3 L1201.7 946.4 L1202.5 945.5 L1203.3 944.6 L1204.1 943.7 L1204.9 942.8 L1205.8 941.9 L1206.6 940.9 L1207.4 940.0 L1208.2 939.0 L1209.0 938.1 L1209.8 937.1 L1210.6 936.2 L1211.4 935.2 L1212.3 934.2 L1213.1 933.2 L1213.9 932.2 L1214.7 931.2 L1215.5 930.2 L1216.3 929.1 L1217.1 928.1 L1217.9 927.1 L1218.8 926.0 L1219.6 925.0 L1220.4 923.9 L1221.2 922.9 L1222.0 921.8 L1222.8 920.8 L1223.6 919.7 L1224.4 918.6 L1225.3 917.5 L1226.1 916.5 L1226.9 915.4 L1227.7 914.3 L1228.5 913.2 L1229.3 912.1 L1230.1 911.0 L1230.9 909.9 L1231.8 908.8 L1232.6 907.7 L1233.4 906.6 L1234.2 905.5 L1235.0 904.3 L1235.8 903.2 L1236.6 902.1 L1237.4 901.0 L1238.3 899.9 L1239.1 898.7 L1239.9 897.6 L1240.7 896.5 L1241.5 895.3 L1242.3 894.2 L1243.1 893.1 L1243.9 891.9 L1244.7 890.8 L1245.6 889.7 L1246.4 888.5 L1247.2 887.4 L1248.0 886.2 L1248.8 885.1 L1249.6 883.9 L1250.4 882.8 L1251.2 881.6 L1252.1 880.5 L1252.9 879.3 L1253.7 878.2 L1254.5 877.0 L1255.3 875.9 L1256.1 874.7 L1256.9 873.6 L1257.7 872.4 L1258.6 871.3 L1259.4 870.1 L1260.2 869.0 L1261.0 867.8 L1261.8 866.7 L1262.6 865.5 L1263.4 864.4 L1264.2 863.2 L1265.1 862.1 L1265.9 860.9 L1266.7 859.8 L1267.5 858.6 L1268.3 857.5 L1269.1 856.3 L1269.9 855.2 L1270.7 854.0 L1271.6 852.9 L1272.4 851.7 L1273.2 850.6 L1274.0 849.4 L1274.8 848.3 L1275.6 847.1 L1276.4 846.0 L1277.2 844.8 L1278.0 843.7 L1278.9 842.5 L1279.7 841.4 L1280.5 840.2 L1281.3 839.1 L1282.1 837.9 L1282.9 836.8 L1283.7 835.6 L1284.5 834.5 L1285.4 833.4 L1286.2 832.2 L1287.0 831.1 L1287.8 829.9 L1288.6 828.8 L1289.4 827.7 L1290.2 826.5 L1291.0 825.4 L1291.9 824.2 L1292.7 823.1 L1293.5 822.0 L1294.3 820.8 L1295.1 819.7 L1295.9 818.6 L1296.7 817.4 L1297.5 816.3 L1298.4 815.2 L1299.2 814.0 L1300.0 812.9 L1300.8 811.8 L1301.6 810.6 L1302.4 809.5 L1303.2 808.4 L1304.0 807.2 L1304.9 806.1 L1305.7 805.0 L1306.5 803.9 L1307.3 802.7 L1308.1 801.6 L1308.9 800.5 L1309.7 799.4 L1310.5 798.2 L1311.4 797.1 L1312.2 796.0 L1313.0 794.9 L1313.8 793.7 L1314.6 792.6 L1315.4 791.5 L1316.2 790.4 L1317.0 789.3 L1317.8 788.2 L1318.7 787.0 L1319.5 785.9 L1320.3 784.8 L1321.1 783.7 L1321.9 782.6 L1322.7 781.5 L1323.5 780.3 L1324.3 779.2 L1325.2 778.1 L1326.0 777.0 L1326.8 775.9 L1327.6 774.8 L1328.4 773.7 L1329.2 772.6 L1330.0 771.5 L1330.8 770.3 L1331.7 769.2 L1332.5 768.1 L1333.3 767.0 L1334.1 765.9 L1334.9 764.8 L1335.7 763.7 L1336.5 762.6 L1337.3 761.5 L1338.2 760.4 L1339.0 759.3 L1339.8 758.2 L1340.6 757.1 L1341.4 756.0 L1342.2 754.9 L1343.0 753.8 L1343.8 752.7 L1344.7 751.6 L1345.5 750.5 L1346.3 749.4 L1347.1 748.3 L1347.9 747.2 L1348.7 746.1 L1349.5 745.0 L1350.3 743.9 L1351.2 742.8 L1352.0 741.7 L1352.8 740.6 L1353.6 739.5 L1354.4 738.4 L1355.2 737.3 L1356.0 736.2 L1356.8 735.1 L1357.6 734.0 L1358.5 732.9 L1359.3 731.8 L1360.1 730.7 L1360.9 729.6 L1361.7 728.5 L1362.5 727.4 L1363.3 726.3 L1364.1 725.2 L1365.0 724.1 L1365.8 723.0 L1366.6 721.9 L1367.4 720.8 L1368.2 719.7 L1369.0 718.6 L1369.8 717.5 L1370.6 716.4 L1371.5 715.3 L1372.3 714.2 L1373.1 713.2 L1373.9 712.1 L1374.7 711.0 L1375.5 709.9 L1376.3 708.8 L1377.1 707.7 L1378.0 706.6 L1378.8 705.5 L1379.6 704.4 L1380.4 703.3 L1381.2 702.2 L1382.0 701.1 L1382.8 700.0 L1383.6 698.9 L1384.5 697.8 L1385.3 696.7 L1386.1 695.6 L1386.9 694.5 L1387.7 693.4 L1388.5 692.3 L1389.3 691.2 L1390.1 690.1 L1390.9 689.0 L1391.8 687.9 L1392.6 686.8 L1393.4 685.7 L1394.2 684.6 L1395.0 683.5 L1395.8 682.4 L1396.6 681.3 L1397.4 680.2 L1398.3 679.1 L1399.1 678.0 L1399.9 676.9 L1400.7 675.8 L1401.5 674.7 L1402.3 673.6 L1403.1 672.5 L1403.9 671.4 L1404.8 670.3 L1405.6 669.2 L1406.4 668.1 L1407.2 667.0 L1408.0 665.9 L1408.8 664.8 L1409.6 663.7 L1410.4 662.6 L1411.3 661.5 L1412.1 660.4 L1412.9 659.3 L1413.7 658.2 L1414.5 657.1 L1415.3 656.0 L1416.1 654.8 L1416.9 653.7 L1417.8 652.6 L1418.6 651.5 L1419.4 650.4 L1420.2 649.3 L1421.0 648.2 L1421.8 647.1 L1422.6 646.0 L1423.4 644.9 L1424.3 643.8 L1425.1 642.6 L1425.9 641.5 L1426.7 640.4 L1427.5 639.3 L1428.3 638.2 L1429.1 637.1 L1429.9 636.0 L1430.7 634.9 L1431.6 633.8 L1432.4 632.6 L1433.2 631.5 L1434.0 630.4 L1434.8 629.3 L1435.6 628.2 L1436.4 627.1 L1437.2 626.0 L1438.1 624.9 L1438.9 623.7 L1439.7 622.6 L1440.5 621.5 L1441.3 620.4 L1442.1 619.3 L1442.9 618.2 L1443.7 617.1 L1444.6 615.9 L1445.4 614.8 L1446.2 613.7 L1447.0 612.6 L1447.8 611.5 L1448.6 610.4 L1449.4 609.3 L1450.2 608.1 L1451.1 607.0 L1451.9 605.9 L1452.7 604.8 L1453.5 603.7 L1454.3 602.6 L1455.1 601.5 L1455.9 600.4 L1456.7 599.2 L1457.6 598.1 L1458.4 597.0 L1459.2 595.9 L1460.0 594.8 L1460.8 593.7 L1461.6 592.6 L1462.4 591.5 L1463.2 590.4 L1464.0 589.3 L1464.9 588.2 L1465.7 587.1 L1466.5 586.0 L1467.3 584.9 L1468.1 583.8 L1468.9 582.7 L1469.7 581.6 L1470.5 580.5 L1471.4 579.4 L1472.2 578.3 L1473.0 577.2 L1473.8 576.1 L1474.6 575.0 L1475.4 573.9 L1476.2 572.8 L1477.0 571.8 L1477.9 570.7 L1478.7 569.6 L1479.5 568.5 L1480.3 567.4 L1481.1 566.4 L1481.9 565.3 L1482.7 564.2 L1483.5 563.2 L1484.4 562.1 L1485.2 561.0 L1486.0 560.0 L1486.8 558.9 L1487.6 557.9 L1488.4 556.8 L1489.2 555.8 L1490.0 554.7 L1490.9 553.7 L1491.7 552.6 L1492.5 551.6 L1493.3 550.6 L1494.1 549.6 L1494.9 548.5 L1495.7 547.5 L1496.5 546.5 L1497.4 545.5 L1498.2 544.5 L1499.0 543.5 L1499.8 542.5 L1500.6 541.5 L1501.4 540.6 L1502.2 539.6 L1503.0 538.6 L1503.8 537.6 L1504.7 536.7 L1505.5 535.7 L1506.3 534.8 L1507.1 533.8 L1507.9 532.9 L1508.7 532.0 L1509.5 531.1 L1510.3 530.2 L1511.2 529.3 L1512.0 528.4 L1512.8 527.5 L1513.6 526.6 L1514.4 525.7 L1515.2 524.9 L1516.0 524.0 L1516.8 523.2 L1517.7 522.3 L1518.5 521.5 L1519.3 520.7 L1520.1 519.9 L1520.9 519.1 L1521.7 518.3 L1522.5 517.6 L1523.3 516.8 L1524.2 516.1 L1525.0 515.3 L1525.8 514.6 L1526.6 513.9 L1527.4 513.2 L1528.2 512.5 L1529.0 511.8 L1529.8 511.2 L1530.7 510.6 L1531.5 509.9 L1532.3 509.3 L1533.1 508.7 L1533.9 508.1 L1534.7 507.6 L1535.5 507.0 L1536.3 506.5 L1537.2 506.0 L1538.0 505.5 L1538.8 505.0 L1539.6 504.6 L1540.4 504.2 L1541.2 503.7 L1542.0 503.3 L1542.8 503.0 L1543.6 502.6 L1544.5 502.3 L1545.3 502.0 L1546.1 501.7 L1546.9 501.4 L1547.7 501.2 L1548.5 501.0 L1549.3 500.8 L1550.1 500.6 L1551.0 500.5 L1551.8 500.4 L1552.6 500.3 L1553.4 500.2 L1554.2 500.2 L1555.0 500.2 L1555.8 500.2 L1556.6 500.3 L1557.5 500.4 L1558.3 500.5 L1559.1 500.6 L1559.9 500.8 L1560.7 501.0 L1561.5 501.3 L1562.3 501.5 L1563.1 501.9 L1564.0 502.2 L1564.8 502.6 L1565.6 503.0 L1566.4 503.5 L1567.2 504.0 L1568.0 504.5 L1568.8 505.0 L1569.6 505.7 L1570.5 506.3 L1571.3 507.0 L1572.1 507.7 L1572.9 508.5 L1573.7 509.3 L1574.5 510.1 L1575.3 511.0 L1576.1 512.0 L1576.9 513.0 L1577.8 514.0 L1578.6 515.1 L1579.4 516.2 L1580.2 517.3 L1581.0 518.6 L1581.8 519.8 L1582.6 521.1 L1583.4 522.5 L1584.3 523.9 L1585.1 525.3 L1585.9 526.8 L1586.7 528.4 L1587.5 530.0 L1588.3 531.6 L1589.1 533.3 L1589.9 535.1 L1590.8 536.9 L1591.6 538.7 L1592.4 540.6 L1593.2 542.6 L1594.0 544.6 L1594.8 546.6 L1595.6 548.7 L1596.4 550.9 L1597.3 553.1 L1598.1 555.4 L1598.9 557.7 L1599.7 560.1 L1600.5 562.5 L1601.3 565.0 L1602.1 567.5 L1602.9 570.1 L1603.8 572.7 L1604.6 575.4 L1605.4 578.1 L1606.2 580.9 L1607.0 583.7 L1607.8 586.6 L1608.6 589.6 L1609.4 592.5 L1610.3 595.6 L1611.1 598.6 L1611.9 601.7 L1612.7 604.9 L1613.5 608.1 L1614.3 611.4 L1615.1 614.7 L1615.9 618.0 L1616.7 621.4 L1617.6 624.8 L1618.4 628.2 L1619.2 631.7 L1620.0 635.3 L1620.8 638.8 L1621.6 642.4 L1622.4 646.1 L1623.2 649.7 L1624.1 653.4 L1624.9 657.2 L1625.7 660.9 L1626.5 664.7 L1627.3 668.5 L1628.1 672.3 L1628.9 676.2 L1629.7 680.1 L1630.6 684.0 L1631.4 687.9 L1632.2 691.8 L1633.0 695.7 L1633.8 699.7 L1634.6 703.6 L1635.4 707.6 L1636.2 711.6 L1637.1 715.5 L1637.9 719.5 L1638.7 723.5 L1639.5 727.5 L1640.3 731.5 L1641.1 735.5 L1641.9 739.4 L1642.7 743.4 L1643.6 747.4 L1644.4 751.3 L1645.2 755.3 L1646.0 759.2 L1646.8 763.1 L1647.6 767.0 L1648.4 770.9 L1649.2 774.7 L1650.0 778.6 L1650.9 782.4 L1651.7 786.2 L1652.5 789.9 L1653.3 793.7 L1654.1 797.4 L1654.9 801.0 L1655.7 804.7 L1656.5 808.3 L1657.4 811.9 L1658.2 815.4 L1659.0 818.9 L1659.8 822.4 L1660.6 825.8 L1661.4 829.2 L1662.2 832.5 L1663.0 835.8 L1663.9 839.1 L1664.7 842.3 L1665.5 845.5 L1666.3 848.6 L1667.1 851.7 L1667.9 854.7 L1668.7 857.7 L1669.5 860.6 L1670.4 863.5 L1671.2 866.4 L1672.0 869.2 L1672.8 871.9 L1673.6 874.6 L1674.4 877.2 L1675.2 879.8 L1676.0 882.3 L1676.9 884.8 L1677.7 887.3 L1678.5 889.6 L1679.3 892.0 L1680.1 894.2 L1680.9 896.5 L1681.7 898.6 L1682.5 900.7 L1683.4 902.8 L1684.2 904.8 L1685.0 906.8 L1685.8 908.7 L1686.6 910.5 L1687.4 912.3 L1688.2 914.1 L1689.0 915.8 L1689.8 917.4 L1690.7 919.0 L1691.5 920.6 L1692.3 922.1 L1693.1 923.5 L1693.9 924.9 L1694.7 926.3 L1695.5 927.6 L1696.3 928.8 L1697.2 930.0 L1698.0 931.2 L1698.8 932.3 L1699.6 933.4 L1700.4 934.4 L1701.2 935.4 L1702.0 936.3 L1702.8 937.2 L1703.7 938.0 L1704.5 938.8 L1705.3 939.6 L1706.1 940.3 L1706.9 941.0 L1707.7 941.6 L1708.5 942.2 L1709.3 942.8 L1710.2 943.3 L1711.0 943.8 L1711.8 944.2 L1712.6 944.6 L1713.4 945.0 L1714.2 945.3 L1715.0 945.6 L1715.8 945.9 L1716.7 946.1 L1717.5 946.3 L1718.3 946.5 L1719.1 946.6 L1719.9 946.7 L1720.7 946.8 L1721.5 946.8 L1722.3 946.8 L1723.1 946.8 L1724.0 946.8 L1724.8 946.7 L1725.6 946.6 L1726.4 946.5 L1727.2 946.3 L1728.0 946.1 L1728.8 945.9 L1729.6 945.7 L1730.5 945.4 L1731.3 945.2 L1732.1 944.8 L1732.9 944.5 L1733.7 944.2 L1734.5 943.8 L1735.3 943.4 L1736.1 943.0 L1737.0 942.6 L1737.8 942.1 L1738.6 941.6 L1739.4 941.1 L1740.2 940.6 L1741.0 940.1 L1741.8 939.5 L1742.6 939.0 L1743.5 938.4 L1744.3 937.8 L1745.1 937.2 L1745.9 936.6 L1746.7 935.9 L1747.5 935.2 L1748.3 934.6 L1749.1 933.9 L1750.0 933.2 L1750.8 932.5 L1751.6 931.7 L1752.4 931.0 L1753.2 930.2 L1754.0 929.5 L1754.8 928.7 L1755.6 927.9 L1756.5 927.1 L1757.3 926.3 L1758.1 925.4 L1758.9 924.6 L1759.7 923.8 L1760.5 922.9 L1761.3 922.0 L1762.1 921.2 L1762.9 920.3 L1763.8 919.4 L1764.6 918.5 L1765.4 917.6 L1766.2 916.7 L1767.0 915.7 L1767.8 914.8 L1768.6 913.9 L1769.4 912.9 L1770.3 912.0 L1771.1 911.0 L1771.9 910.0 L1772.7 909.1 L1773.5 908.1 L1774.3 907.1 L1775.1 906.1 L1775.9 905.1 L1776.8 904.1 L1777.6 903.1 L1778.4 902.1 L1779.2 901.1 L1780.0 900.0 L1780.8 899.0 L1781.6 898.0 L1782.4 896.9 L1783.3 895.9 L1784.1 894.9 L1784.9 893.8 L1785.7 892.8 L1786.5 891.7 L1787.3 890.6 L1788.1 889.6 L1788.9 888.5 L1789.8 887.4 L1790.6 886.4 L1791.4 885.3 L1792.2 884.2 L1793.0 883.1 L1793.8 882.0 L1794.6 881.0 L1795.4 879.9 L1796.3 878.8 L1797.1 877.7 L1797.9 876.6 L1798.7 875.5 L1799.5 874.4 L1800.3 873.3 L1801.1 872.2 L1801.9 871.1 L1802.7 870.0 L1803.6 868.9 L1804.4 867.7 L1805.2 866.6 L1806.0 865.5 L1806.8 864.4 L1807.6 863.3 L1808.4 862.2 L1809.2 861.1 L1810.1 859.9 L1810.9 858.8 L1811.7 857.7 L1812.5 856.6 L1813.3 855.5 L1814.1 854.3 L1814.9 853.2 L1815.7 852.1 L1816.6 851.0 L1817.4 849.8 L1818.2 848.7 L1819.0 847.6 L1819.8 846.5 L1820.6 845.3 L1821.4 844.2 L1822.2 843.1 L1823.1 841.9 L1823.9 840.8 L1824.7 839.7 L1825.5 838.6 L1826.3 837.4 L1827.1 836.3 L1827.9 835.2 L1828.7 834.0 L1829.6 832.9 L1830.4 831.8 L1831.2 830.6 L1832.0 829.5 L1832.8 828.4 L1833.6 827.3 L1834.4 826.1 L1835.2 825.0 L1836.0 823.9 L1836.9 822.7 L1837.7 821.6 L1838.5 820.5 L1839.3 819.4" fill="none" stroke="#e2dc62" stroke-width="1.5"/><path d="M1109.1 110.2 L1109.9 112.4 L1110.7 114.8 L1111.5 117.2 L1112.4 119.6 L1113.2 122.1 L1114.0 124.7 L1114.8 127.3 L1115.6 130.0 L1116.4 132.7 L1117.2 135.4 L1118.0 138.2 L1118.9 141.0 L1119.7 143.9 L1120.5 146.8 L1121.3 149.8 L1122.1 152.7 L1122.9 155.7 L1123.7 158.8 L1124.5 161.8 L1125.4 164.9 L1126.2 168.0 L1127.0 171.2 L1127.8 174.3 L1128.6 177.5 L1129.4 180.7 L1130.2 183.9 L1131.0 187.1 L1131.8 190.4 L1132.7 193.6 L1133.5 196.9 L1134.3 200.1 L1135.1 203.4 L1135.9 206.7 L1136.7 210.0 L1137.5 213.3 L1138.3 216.6 L1139.2 219.9 L1140.0 223.2 L1140.8 226.5 L1141.6 229.7 L1142.4 233.0 L1143.2 236.3 L1144.0 239.6 L1144.8 242.9 L1145.7 246.1 L1146.5 249.4 L1147.3 252.6 L1148.1 255.9 L1148.9 259.1 L1149.7 262.3 L1150.5 265.5 L1151.3 268.7 L1152.2 271.9 L1153.0 275.0 L1153.8 278.2 L1154.6 281.3 L1155.4 284.4 L1156.2 287.5 L1157.0 290.6 L1157.8 293.7 L1158.7 296.7 L1159.5 299.8 L1160.3 302.8 L1161.1 305.8 L1161.9 308.8 L1162.7 311.7 L1163.5 314.6 L1164.3 317.6 L1165.2 320.4 L1166.0 323.3 L1166.8 326.2 L1167.6 329.0 L1168.4 331.8 L1169.2 334.6 L1170.0 337.4 L1170.8 340.1 L1171.6 342.8 L1172.5 345.5 L1173.3 348.2 L1174.1 350.9 L1174.9 353.5 L1175.7 356.1 L1176.5 358.7 L1177.3 361.3 L1178.1 363.8 L1179.0 366.3 L1179.8 368.8 L1180.6 371.3 L1181.4 373.8 L1182.2 376.2 L1183.0 378.6 L1183.8 381.0 L1184.6 383.3 L1185.5 385.7 L1186.3 388.0 L1187.1 390.3 L1187.9 392.6 L1188.7 394.8 L1189.5 397.0 L1190.3 399.3 L1191.1 401.4 L1192.0 403.6 L1192.8 405.7 L1193.6 407.9 L1194.4 410.0 L1195.2 412.0 L1196.0 414.1 L1196.8 416.1 L1197.6 418.1 L1198.5 420.1 L1199.3 422.1 L1200.1 424.1 L1200.9 426.0 L1201.7 427.9 L1202.5 429.8 L1203.3 431.7 L1204.1 433.5 L1204.9 435.4 L1205.8 437.2 L1206.6 439.0 L1207.4 440.7 L1208.2 442.5 L1209.0 444.2 L1209.8 445.9 L1210.6 447.6 L1211.4 449.3 L1212.3 451.0 L1213.1 452.6 L1213.9 454.3 L1214.7 455.9 L1215.5 457.5 L1216.3 459.0 L1217.1 460.6 L1217.9 462.1 L1218.8 463.6 L1219.6 465.1 L1220.4 466.6 L1221.2 468.1 L1222.0 469.6 L1222.8 471.0 L1223.6 472.4 L1224.4 473.8 L1225.3 475.2 L1226.1 476.6 L1226.9 478.0 L1227.7 479.3 L1228.5 480.6 L1229.3 481.9 L1230.1 483.2 L1230.9 484.5 L1231.8 485.8 L1232.6 487.0 L1233.4 488.3 L1234.2 489.5 L1235.0 490.7 L1235.8 491.9 L1236.6 493.1 L1237.4 494.3 L1238.3 495.4 L1239.1 496.6 L1239.9 497.7 L1240.7 498.8 L1241.5 499.9 L1242.3 501.0 L1243.1 502.1 L1243.9 503.2 L1244.7 504.2 L1245.6 505.3 L1246.4 506.3 L1247.2 507.3 L1248.0 508.3 L1248.8 509.3 L1249.6 510.3 L1250.4 511.2 L1251.2 512.2 L1252.1 513.1 L1252.9 514.1 L1253.7 515.0 L1254.5 515.9 L1255.3 516.8 L1256.1 517.7 L1256.9 518.6 L1257.7 519.5 L1258.6 520.3 L1259.4 521.2 L1260.2 522.0 L1261.0 522.8 L1261.8 523.6 L1262.6 524.4 L1263.4 525.2 L1264.2 526.0 L1265.1 526.8 L1265.9 527.6 L1266.7 528.3 L1267.5 529.1 L1268.3 529.8 L1269.1 530.5 L1269.9 531.3 L1270.7 532.0 L1271.6 532.7 L1272.4 533.4 L1273.2 534.0 L1274.0 534.7 L1274.8 535.4 L1275.6 536.0 L1276.4 536.7 L1277.2 537.3 L1278.0 538.0 L1278.9 538.6 L1279.7 539.2 L1280.5 539.8 L1281.3 540.4 L1282.1 541.0 L1282.9 541.6 L1283.7 542.1 L1284.5 542.7 L1285.4 543.3 L1286.2 543.8 L1287.0 544.3 L1287.8 544.9 L1288.6 545.4 L1289.4 545.9 L1290.2 546.4 L1291.0 546.9 L1291.9 547.4 L1292.7 547.9 L1293.5 548.4 L1294.3 548.9 L1295.1 549.3 L1295.9 549.8 L1296.7 550.3 L1297.5 550.7 L1298.4 551.1 L1299.2 551.6 L1300.0 552.0 L1300.8 552.4 L1301.6 552.8 L1302.4 553.2 L1303.2 553.6 L1304.0 554.0 L1304.9 554.4 L1305.7 554.8 L1306.5 555.2 L1307.3 555.5 L1308.1 555.9 L1308.9 556.2 L1309.7 556.6 L1310.5 556.9 L1311.4 557.3 L1312.2 557.6 L1313.0 557.9 L1313.8 558.2 L1314.6 558.5 L1315.4 558.8 L1316.2 559.1 L1317.0 559.4 L1317.8 559.7 L1318.7 560.0 L1319.5 560.2 L1320.3 560.5 L1321.1 560.8 L1321.9 561.0 L1322.7 561.3 L1323.5 561.5 L1324.3 561.8 L1325.2 562.0 L1326.0 562.2 L1326.8 562.4 L1327.6 562.7 L1328.4 562.9 L1329.2 563.1 L1330.0 563.3 L1330.8 563.5 L1331.7 563.7 L1332.5 563.8 L1333.3 564.0 L1334.1 564.2 L1334.9 564.3 L1335.7 564.5 L1336.5 564.7 L1337.3 564.8 L1338.2 565.0 L1339.0 565.1 L1339.8 565.2 L1340.6 565.4 L1341.4 565.5 L1342.2 565.6 L1343.0 565.7 L1343.8 565.8 L1344.7 565.9 L1345.5 566.0 L1346.3 566.1 L1347.1 566.2 L1347.9 566.3 L1348.7 566.4 L1349.5 566.4 L1350.3 566.5 L1351.2 566.5 L1352.0 566.6 L1352.8 566.7 L1353.6 566.7 L1354.4 566.7 L1355.2 566.8 L1356.0 566.8 L1356.8 566.8 L1357.6 566.8 L1358.5 566.9 L1359.3 566.9 L1360.1 566.9 L1360.9 566.9 L1361.7 566.9 L1362.5 566.9 L1363.3 566.8 L1364.1 566.8 L1365.0 566.8 L1365.8 566.8 L1366.6 566.7 L1367.4 566.7 L1368.2 566.6 L1369.0 566.6 L1369.8 566.5 L1370.6 566.5 L1371.5 566.4 L1372.3 566.3 L1373.1 566.2 L1373.9 566.2 L1374.7 566.1 L1375.5 566.0 L1376.3 565.9 L1377.1 565.8 L1378.0 565.7 L1378.8 565.5 L1379.6 565.4 L1380.4 565.3 L1381.2 565.2 L1382.0 565.0 L1382.8 564.9 L1383.6 564.7 L1384.5 564.6 L1385.3 564.4 L1386.1 564.3 L1386.9 564.1 L1387.7 563.9 L1388.5 563.8 L1389.3 563.6 L1390.1 563.4 L1390.9 563.2 L1391.8 563.0 L1392.6 562.8 L1393.4 562.6 L1394.2 562.4 L1395.0 562.1 L1395.8 561.9 L1396.6 561.7 L1397.4 561.4 L1398.3 561.2 L1399.1 560.9 L1399.9 560.7 L1400.7 560.4 L1401.5 560.2 L1402.3 559.9 L1403.1 559.6 L1403.9 559.3 L1404.8 559.0 L1405.6 558.7 L1406.4 558.4 L1407.2 558.1 L1408.0 557.8 L1408.8 557.5 L1409.6 557.2 L1410.4 556.8 L1411.3 556.5 L1412.1 556.2 L1412.9 555.8 L1413.7 555.5 L1414.5 555.1 L1415.3 554.7 L1416.1 554.4 L1416.9 554.0 L1417.8 553.6 L1418.6 553.2 L1419.4 552.8 L1420.2 552.4 L1421.0 552.0 L1421.8 551.5 L1422.6 551.1 L1423.4 550.7 L1424.3 550.3 L1425.1 549.8 L1425.9 549.4 L1426.7 548.9 L1427.5 548.4 L1428.3 547.9 L1429.1 547.5 L1429.9 547.0 L1430.7 546.5 L1431.6 546.0 L1432.4 545.5 L1433.2 545.0 L1434.0 544.4 L1434.8 543.9 L1435.6 543.4 L1436.4 542.8 L1437.2 542.3 L1438.1 541.7 L1438.9 541.1 L1439.7 540.6 L1440.5 540.0 L1441.3 539.4 L1442.1 538.8 L1442.9 538.2 L1443.7 537.6 L1444.6 536.9 L1445.4 536.3 L1446.2 535.7 L1447.0 535.0 L1447.8 534.4 L1448.6 533.7 L1449.4 533.0 L1450.2 532.3 L1451.1 531.6 L1451.9 530.9 L1452.7 530.2 L1453.5 529.5 L1454.3 528.8 L1455.1 528.1 L1455.9 527.3 L1456.7 526.6 L1457.6 525.8 L1458.4 525.0 L1459.2 524.2 L1460.0 523.5 L1460.8 522.7 L1461.6 521.8 L1462.4 521.0 L1463.2 520.2 L1464.0 519.4 L1464.9 518.5 L1465.7 517.6 L1466.5 516.8 L1467.3 515.9 L1468.1 515.0 L1468.9 514.1 L1469.7 513.2 L1470.5 512.3 L1471.4 511.3 L1472.2 510.4 L1473.0 509.4 L1473.8 508.5 L1474.6 507.5 L1475.4 506.5 L1476.2 505.5 L1477.0 504.5 L1477.9 503.5 L1478.7 502.5 L1479.5 501.4 L1480.3 500.4 L1481.1 499.3 L1481.9 498.2 L1482.7 497.1 L1483.5 496.0 L1484.4 494.9 L1485.2 493.8 L1486.0 492.6 L1486.8 491.5 L1487.6 490.3 L1488.4 489.1 L1489.2 487.9 L1490.0 486.7 L1490.9 485.5 L1491.7 484.3 L1492.5 483.0 L1493.3 481.8 L1494.1 480.5 L1494.9 479.2 L1495.7 477.9 L1496.5 476.6 L1497.4 475.3 L1498.2 473.9 L1499.0 472.6 L1499.8 471.2 L1500.6 469.8 L1501.4 468.4 L1502.2 467.0 L1503.0 465.6 L1503.8 464.1 L1504.7 462.7 L1505.5 461.2 L1506.3 459.7 L1507.1 458.2 L1507.9 456.7 L1508.7 455.1 L1509.5 453.6 L1510.3 452.0 L1511.2 450.4 L1512.0 448.8 L1512.8 447.2 L1513.6 445.6 L1514.4 443.9 L1515.2 442.3 L1516.0 440.6 L1516.8 438.9 L1517.7 437.2 L1518.5 435.4 L1519.3 433.7 L1520.1 431.9 L1520.9 430.1 L1521.7 428.3 L1522.5 426.5 L1523.3 424.7 L1524.2 422.8 L1525.0 420.9 L1525.8 419.0 L1526.6 417.1 L1527.4 415.2 L1528.2 413.3 L1529.0 411.3 L1529.8 409.3 L1530.7 407.3 L1531.5 405.3 L1532.3 403.3 L1533.1 401.2 L1533.9 399.1 L1534.7 397.0 L1535.5 394.9 L1536.3 392.8 L1537.2 390.7 L1538.0 388.5 L1538.8 386.3 L1539.6 384.1 L1540.4 381.9 L1541.2 379.7 L1542.0 377.4 L1542.8 375.1 L1543.6 372.8 L1544.5 370.5 L1545.3 368.2 L1546.1 365.8 L1546.9 363.5 L1547.7 361.1 L1548.5 358.7 L1549.3 356.3 L1550.1 353.8 L1551.0 351.4 L1551.8 348.9 L1552.6 346.4 L1553.4 343.9 L1554.2 341.4 L1555.0 338.9 L1555.8 336.3 L1556.6 333.8 L1557.5 331.2 L1558.3 328.6 L1559.1 326.0 L1559.9 323.3 L1560.7 320.7 L1561.5 318.0 L1562.3 315.4 L1563.1 312.7 L1564.0 310.0 L1564.8 307.3 L1565.6 304.5 L1566.4 301.8 L1567.2 299.0 L1568.0 296.3 L1568.8 293.5 L1569.6 290.7 L1570.5 288.0 L1571.3 285.2 L1572.1 282.3 L1572.9 279.5 L1573.7 276.7 L1574.5 273.9 L1575.3 271.1 L1576.1 268.2 L1576.9 265.4 L1577.8 262.5 L1578.6 259.7 L1579.4 256.8 L1580.2 254.0 L1581.0 251.1 L1581.8 248.3 L1582.6 245.4 L1583.4 242.6 L1584.3 239.7 L1585.1 236.9 L1585.9 234.0 L1586.7 231.2 L1587.5 228.4 L1588.3 225.5 L1589.1 222.7 L1589.9 219.9 L1590.8 217.1 L1591.6 214.4 L1592.4 211.6 L1593.2 208.9 L1594.0 206.1 L1594.8 203.4 L1595.6 200.7 L1596.4 198.0 L1597.3 195.4 L1598.1 192.7 L1598.9 190.1 L1599.7 187.5 L1600.5 185.0 L1601.3 182.4 L1602.1 179.9 L1602.9 177.4 L1603.8 175.0 L1604.6 172.6 L1605.4 170.2 L1606.2 167.8 L1607.0 165.5 L1607.8 163.3 L1608.6 161.0 L1609.4 158.8 L1610.3 156.7 L1611.1 154.6 L1611.9 152.5 L1612.7 150.5 L1613.5 148.5 L1614.3 146.6 L1615.1 144.7 L1615.9 142.9 L1616.7 141.1 L1617.6 139.4 L1618.4 137.7 L1619.2 136.1 L1620.0 134.5 L1620.8 133.0 L1621.6 131.6 L1622.4 130.2 L1623.2 128.9 L1624.1 127.6 L1624.9 126.4 L1625.7 125.3 L1626.5 124.2 L1627.3 123.2 L1628.1 122.3 L1628.9 121.4 L1629.7 120.6 L1630.6 119.9 L1631.4 119.2 L1632.2 118.6 L1633.0 118.1 L1633.8 117.6 L1634.6 117.2 L1635.4 116.9 L1636.2 116.7 L1637.1 116.5 L1637.9 116.4 L1638.7 116.3 L1639.5 116.4 L1640.3 116.5 L1641.1 116.7 L1641.9 116.9 L1642.7 117.2 L1643.6 117.6 L1644.4 118.1 L1645.2 118.6 L1646.0 119.2 L1646.8 119.9 L1647.6 120.6 L1648.4 121.4 L1649.2 122.3 L1650.0 123.2 L1650.9 124.2 L1651.7 125.3 L1652.5 126.4 L1653.3 127.6 L1654.1 128.9 L1654.9 130.2 L1655.7 131.6 L1656.5 133.1 L1657.4 134.6 L1658.2 136.1 L1659.0 137.7 L1659.8 139.4 L1660.6 141.1 L1661.4 142.9 L1662.2 144.8 L1663.0 146.6 L1663.9 148.6 L1664.7 150.6 L1665.5 152.6 L1666.3 154.7 L1667.1 156.8 L1667.9 159.0 L1668.7 161.2 L1669.5 163.4 L1670.4 165.7 L1671.2 168.0 L1672.0 170.4 L1672.8 172.8 L1673.6 175.2 L1674.4 177.7 L1675.2 180.2 L1676.0 182.7 L1676.9 185.2 L1677.7 187.8 L1678.5 190.4 L1679.3 193.1 L1680.1 195.7 L1680.9 198.4 L1681.7 201.1 L1682.5 203.8 L1683.4 206.5 L1684.2 209.3 L1685.0 212.0 L1685.8 214.8 L1686.6 217.6 L1687.4 220.4 L1688.2 223.2 L1689.0 226.1 L1689.8 228.9 L1690.7 231.8 L1691.5 234.6 L1692.3 237.5 L1693.1 240.3 L1693.9 243.2 L1694.7 246.1 L1695.5 248.9 L1696.3 251.8 L1697.2 254.7 L1698.0 257.6 L1698.8 260.4 L1699.6 263.3 L1700.4 266.2 L1701.2 269.0 L1702.0 271.9 L1702.8 274.7 L1703.7 277.6 L1704.5 280.4 L1705.3 283.3 L1706.1 286.1 L1706.9 288.9 L1707.7 291.7 L1708.5 294.5 L1709.3 297.3 L1710.2 300.1 L1711.0 302.8 L1711.8 305.6 L1712.6 308.3 L1713.4 311.1 L1714.2 313.8 L1715.0 316.5 L1715.8 319.2 L1716.7 321.9 L1717.5 324.5 L1718.3 327.2 L1719.1 329.8 L1719.9 332.4 L1720.7 335.0 L1721.5 337.6 L1722.3 340.1 L1723.1 342.7 L1724.0 345.2 L1724.8 347.7 L1725.6 350.2 L1726.4 352.7 L1727.2 355.2 L1728.0 357.6 L1728.8 360.1 L1729.6 362.5 L1730.5 364.9 L1731.3 367.2 L1732.1 369.6 L1732.9 371.9 L1733.7 374.3 L1734.5 376.6 L1735.3 378.8 L1736.1 381.1 L1737.0 383.4 L1737.8 385.6 L1738.6 387.8 L1739.4 390.0 L1740.2 392.1 L1741.0 394.3 L1741.8 396.4 L1742.6 398.5 L1743.5 400.6 L1744.3 402.7 L1745.1 404.8 L1745.9 406.8 L1746.7 408.8 L1747.5 410.8 L1748.3 412.8 L1749.1 414.8 L1750.0 416.7 L1750.8 418.7 L1751.6 420.6 L1752.4 422.5 L1753.2 424.3 L1754.0 426.2 L1754.8 428.0 L1755.6 429.8 L1756.5 431.6 L1757.3 433.4 L1758.1 435.2 L1758.9 436.9 L1759.7 438.7 L1760.5 440.4 L1761.3 442.1 L1762.1 443.8 L1762.9 445.4 L1763.8 447.1 L1764.6 448.7 L1765.4 450.3 L1766.2 451.9 L1767.0 453.5 L1767.8 455.0 L1768.6 456.6 L1769.4 458.1 L1770.3 459.6 L1771.1 461.1 L1771.9 462.6 L1772.7 464.1 L1773.5 465.5 L1774.3 467.0 L1775.1 468.4 L1775.9 469.8 L1776.8 471.2 L1777.6 472.6 L1778.4 473.9 L1779.2 475.3 L1780.0 476.6 L1780.8 477.9 L1781.6 479.2 L1782.4 480.5 L1783.3 481.8 L1784.1 483.0 L1784.9 484.3 L1785.7 485.5 L1786.5 486.7 L1787.3 487.9 L1788.1 489.1 L1788.9 490.3 L1789.8 491.5 L1790.6 492.6 L1791.4 493.7 L1792.2 494.9 L1793.0 496.0 L1793.8 497.1 L1794.6 498.2 L1795.4 499.2 L1796.3 500.3 L1797.1 501.3 L1797.9 502.4 L1798.7 503.4 L1799.5 504.4 L1800.3 505.4 L1801.1 506.4 L1801.9 507.4 L1802.7 508.3 L1803.6 509.3 L1804.4 510.2 L1805.2 511.2 L1806.0 512.1 L1806.8 513.0 L1807.6 513.9 L1808.4 514.8 L1809.2 515.6 L1810.1 516.5 L1810.9 517.4 L1811.7 518.2 L1812.5 519.0 L1813.3 519.9 L1814.1 520.7 L1814.9 521.5 L1815.7 522.3 L1816.6 523.0 L1817.4 523.8 L1818.2 524.6 L1819.0 525.3 L1819.8 526.1 L1820.6 526.8 L1821.4 527.5 L1822.2 528.2 L1823.1 528.9 L1823.9 529.6 L1824.7 530.3 L1825.5 531.0 L1826.3 531.7 L1827.1 532.3 L1827.9 533.0 L1828.7 533.6 L1829.6 534.2 L1830.4 534.9 L1831.2 535.5 L1832.0 536.1 L1832.8 536.7 L1833.6 537.3 L1834.4 537.9 L1835.2 538.4 L1836.0 539.0 L1836.9 539.5 L1837.7 540.1 L1838.5 540.6 L1839.3 541.2" fill="none" stroke="#1ed81c" stroke-width="1.6"/><path d="M497.5 527.2H507.5L503.5 535.8H501.5Z" fill="none" stroke="#fff" stroke-width="1.2" stroke-linejoin="miter"/><path d="M755 529.2H765L761 537.8H759Z" fill="none" stroke="#fff" stroke-width="1.2" stroke-linejoin="miter"/><path d="M1360 556.2H1370L1366 564.8H1364Z" fill="none" stroke="#fff" stroke-width="1.2" stroke-linejoin="miter"/><path d="M1360 713.2H1370L1366 721.8H1364Z" fill="none" stroke="#fff" stroke-width="1.2" stroke-linejoin="miter"/><path d="M1633.5 107.7H1643.5L1639.5 116.3H1637.5Z" fill="none" stroke="#fff" stroke-width="1.2" stroke-linejoin="miter"/><path d="M1633.5 713.2H1643.5L1639.5 721.8H1637.5Z" fill="none" stroke="#fff" stroke-width="1.2" stroke-linejoin="miter"/></svg>
<div class="lbl mono ct" style="left:259px;top:81px;font-size:10px;line-height:12px;color:#fff;-webkit-text-stroke:0.45px currentColor;white-space:pre">Freq Smith S11</div>
<div class="lbl mono ct" style="left:543px;width:200px;text-align:center;top:123.5px;font-size:10px;line-height:12px;color:#fff;white-space:pre">Inductive</div>
<div class="lbl mono ct" style="left:543px;width:200px;text-align:center;top:946.5px;font-size:10px;line-height:12px;color:#fff;white-space:pre">Capacitive</div>
<div class="lbl mono ct" style="left:154px;width:200px;text-align:center;top:546.5px;font-size:10px;line-height:12px;color:#fff;white-space:pre">Short</div>
<div class="lbl mono ct" style="left:277px;width:200px;text-align:center;top:546.5px;font-size:10px;line-height:12px;color:#fff;white-space:pre">10</div>
<div class="lbl mono ct" style="left:411px;width:200px;text-align:center;top:546.5px;font-size:10px;line-height:12px;color:#fff;white-space:pre">25</div>
<div class="lbl mono ct" style="left:543px;width:200px;text-align:center;top:546.5px;font-size:10px;line-height:12px;color:#fff;white-space:pre">50</div>
<div class="lbl mono ct" style="left:677px;width:200px;text-align:center;top:546.5px;font-size:10px;line-height:12px;color:#fff;white-space:pre">100</div>
<div class="lbl mono ct" style="left:811px;width:200px;text-align:center;top:546.5px;font-size:10px;line-height:12px;color:#fff;white-space:pre">250</div>
<div class="lbl mono ct" style="left:931px;width:200px;text-align:center;top:546.5px;font-size:10px;line-height:12px;color:#fff;white-space:pre">Open</div>
<div class="lbl mono ct" style="left:490px;top:525px;font-size:10px;line-height:12px;color:#fff;background:#11151d;white-space:pre">1</div>
<div class="lbl mono ct" style="left:768px;top:528px;font-size:10px;line-height:12px;color:#fff;background:#11151d;white-space:pre">2</div>
<div class="lbl mono ct" style="left:885px;top:111.5px;font-size:10px;line-height:12px;color:#fff;-webkit-text-stroke:0.45px currentColor;white-space:pre">Marker 1 , live</div>
<div class="lbl mono ct" style="left:885px;top:124.5px;font-size:10px;line-height:12px;color:#fff;white-space:pre">Freq    16,725 MHz</div>
<div class="lbl mono ct" style="left:885px;top:137.5px;font-size:10px;line-height:12px;color:#fff;white-space:pre">re im   -0,35475 0,0065407</div>
<div class="lbl mono ct" style="left:885px;top:150.5px;font-size:10px;line-height:12px;color:#fff;white-space:pre">Rs jX    23,813 +j356,37m</div>
<div class="lbl mono ct" style="left:885px;top:163.5px;font-size:10px;line-height:12px;color:#fff;white-space:pre">Rs L/C   23,81 3,3912nH</div>
<div class="lbl mono ct" style="left:885px;top:176.5px;font-size:10px;line-height:12px;color:#fff;white-space:pre">Mag Ang  0,3548 178,9°</div>
<div class="lbl mono ct" style="left:885px;top:189.5px;font-size:10px;line-height:12px;color:#fff;white-space:pre">Imp      23,815</div>
<div class="lbl mono ct" style="left:885px;top:208.5px;font-size:10px;line-height:12px;color:#fff;-webkit-text-stroke:0.45px currentColor;white-space:pre">Marker 2 , live</div>
<div class="lbl mono ct" style="left:885px;top:221.5px;font-size:10px;line-height:12px;color:#fff;white-space:pre">Freq    33,0375 MHz</div>
<div class="lbl mono ct" style="left:885px;top:234.5px;font-size:10px;line-height:12px;color:#fff;white-space:pre">re im   0,29034 0,0017786</div>
<div class="lbl mono ct" style="left:885px;top:247.5px;font-size:10px;line-height:12px;color:#fff;white-space:pre">Rs jX    90,912 +j353,16m</div>
<div class="lbl mono ct" style="left:885px;top:260.5px;font-size:10px;line-height:12px;color:#fff;white-space:pre">Rs L/C   90,91 1,7013nH</div>
<div class="lbl mono ct" style="left:885px;top:273.5px;font-size:10px;line-height:12px;color:#fff;white-space:pre">Mag Ang  0,2903 0,3510°</div>
<div class="lbl mono ct" style="left:885px;top:286.5px;font-size:10px;line-height:12px;color:#fff;white-space:pre">Imp      90,913</div>
<div class="lbl mono ct" style="left:1054px;top:81px;font-size:10px;line-height:12px;color:#fff;-webkit-text-stroke:0.45px currentColor;white-space:pre">Freq Rs+jX S11</div>
<div class="lbl mono ct" style="left:1156px;top:81px;font-size:10px;line-height:12px;color:#22d41e;white-space:pre">S11 Rs live</div>
<div class="lbl mono ct" style="left:1156px;top:94px;font-size:10px;line-height:12px;color:#e0d860;white-space:pre">S11 Xs live</div>
<div class="lbl mono ct" style="right:763px;top:119.0px;font-size:10px;line-height:12px;color:#fff;white-space:pre">90</div>
<div class="lbl mono ct" style="right:763px;top:153.0px;font-size:10px;line-height:12px;color:#fff;white-space:pre">85</div>
<div class="lbl mono ct" style="right:763px;top:186.0px;font-size:10px;line-height:12px;color:#fff;white-space:pre">80</div>
<div class="lbl mono ct" style="right:763px;top:220.0px;font-size:10px;line-height:12px;color:#fff;white-space:pre">75</div>
<div class="lbl mono ct" style="right:763px;top:253.0px;font-size:10px;line-height:12px;color:#fff;white-space:pre">70</div>
<div class="lbl mono ct" style="right:763px;top:287.0px;font-size:10px;line-height:12px;color:#fff;white-space:pre">65</div>
<div class="lbl mono ct" style="right:763px;top:320.0px;font-size:10px;line-height:12px;color:#fff;white-space:pre">60</div>
<div class="lbl mono ct" style="right:763px;top:354.0px;font-size:10px;line-height:12px;color:#fff;white-space:pre">55</div>
<div class="lbl mono ct" style="right:763px;top:387.0px;font-size:10px;line-height:12px;color:#fff;white-space:pre">50</div>
<div class="lbl mono ct" style="right:763px;top:420.0px;font-size:10px;line-height:12px;color:#fff;white-space:pre">45</div>
<div class="lbl mono ct" style="right:763px;top:454.0px;font-size:10px;line-height:12px;color:#fff;white-space:pre">40</div>
<div class="lbl mono ct" style="right:763px;top:487.0px;font-size:10px;line-height:12px;color:#fff;white-space:pre">35</div>
<div class="lbl mono ct" style="right:763px;top:521.0px;font-size:10px;line-height:12px;color:#fff;white-space:pre">30</div>
<div class="lbl mono ct" style="right:763px;top:554.0px;font-size:10px;line-height:12px;color:#fff;white-space:pre">25</div>
<div class="lbl mono ct" style="right:763px;top:588.0px;font-size:10px;line-height:12px;color:#fff;white-space:pre">20</div>
<div class="lbl mono ct" style="right:763px;top:621.0px;font-size:10px;line-height:12px;color:#fff;white-space:pre">15</div>
<div class="lbl mono ct" style="right:763px;top:654.0px;font-size:10px;line-height:12px;color:#fff;white-space:pre">10</div>
<div class="lbl mono ct" style="right:763px;top:688.0px;font-size:10px;line-height:12px;color:#fff;white-space:pre">5</div>
<div class="lbl mono ct" style="right:763px;top:721.0px;font-size:10px;line-height:12px;color:#fff;white-space:pre">0</div>
<div class="lbl mono ct" style="right:763px;top:755.0px;font-size:10px;line-height:12px;color:#fff;white-space:pre">-5</div>
<div class="lbl mono ct" style="right:763px;top:788.0px;font-size:10px;line-height:12px;color:#fff;white-space:pre">-10</div>
<div class="lbl mono ct" style="right:763px;top:822.0px;font-size:10px;line-height:12px;color:#fff;white-space:pre">-15</div>
<div class="lbl mono ct" style="right:763px;top:855.0px;font-size:10px;line-height:12px;color:#fff;white-space:pre">-20</div>
<div class="lbl mono ct" style="right:763px;top:889.0px;font-size:10px;line-height:12px;color:#fff;white-space:pre">-25</div>
<div class="lbl mono ct" style="right:763px;top:922.0px;font-size:10px;line-height:12px;color:#fff;white-space:pre">-30</div>
<div class="lbl mono ct" style="right:763px;top:955.0px;font-size:10px;line-height:12px;color:#fff;white-space:pre">-35</div>
<div class="lbl mono ct" style="left:1017.5px;width:200px;text-align:center;top:976.5px;font-size:10px;line-height:12px;color:#fff;white-space:pre">2M</div>
<div class="lbl mono ct" style="left:1051.5px;width:200px;text-align:center;top:976.5px;font-size:10px;line-height:12px;color:#fff;white-space:pre">4M</div>
<div class="lbl mono ct" style="left:1085.5px;width:200px;text-align:center;top:976.5px;font-size:10px;line-height:12px;color:#fff;white-space:pre">6M</div>
<div class="lbl mono ct" style="left:1118.5px;width:200px;text-align:center;top:976.5px;font-size:10px;line-height:12px;color:#fff;white-space:pre">8M</div>
<div class="lbl mono ct" style="left:1152.5px;width:200px;text-align:center;top:976.5px;font-size:10px;line-height:12px;color:#fff;white-space:pre">10M</div>
<div class="lbl mono ct" style="left:1185.5px;width:200px;text-align:center;top:976.5px;font-size:10px;line-height:12px;color:#fff;white-space:pre">12M</div>
<div class="lbl mono ct" style="left:1219.5px;width:200px;text-align:center;top:976.5px;font-size:10px;line-height:12px;color:#fff;white-space:pre">14M</div>
<div class="lbl mono ct" style="left:1252.5px;width:200px;text-align:center;top:976.5px;font-size:10px;line-height:12px;color:#fff;white-space:pre">16M</div>
<div class="lbl mono ct" style="left:1286.5px;width:200px;text-align:center;top:976.5px;font-size:10px;line-height:12px;color:#fff;white-space:pre">18M</div>
<div class="lbl mono ct" style="left:1319.5px;width:200px;text-align:center;top:976.5px;font-size:10px;line-height:12px;color:#fff;white-space:pre">20M</div>
<div class="lbl mono ct" style="left:1353.5px;width:200px;text-align:center;top:976.5px;font-size:10px;line-height:12px;color:#fff;white-space:pre">22M</div>
<div class="lbl mono ct" style="left:1387.5px;width:200px;text-align:center;top:976.5px;font-size:10px;line-height:12px;color:#fff;white-space:pre">24M</div>
<div class="lbl mono ct" style="left:1420.5px;width:200px;text-align:center;top:976.5px;font-size:10px;line-height:12px;color:#fff;white-space:pre">26M</div>
<div class="lbl mono ct" style="left:1454.5px;width:200px;text-align:center;top:976.5px;font-size:10px;line-height:12px;color:#fff;white-space:pre">28M</div>
<div class="lbl mono ct" style="left:1487.5px;width:200px;text-align:center;top:976.5px;font-size:10px;line-height:12px;color:#fff;white-space:pre">30M</div>
<div class="lbl mono ct" style="left:1521.5px;width:200px;text-align:center;top:976.5px;font-size:10px;line-height:12px;color:#fff;white-space:pre">32M</div>
<div class="lbl mono ct" style="left:1554.5px;width:200px;text-align:center;top:976.5px;font-size:10px;line-height:12px;color:#fff;white-space:pre">34M</div>
<div class="lbl mono ct" style="left:1588.5px;width:200px;text-align:center;top:976.5px;font-size:10px;line-height:12px;color:#fff;white-space:pre">36M</div>
<div class="lbl mono ct" style="left:1622.5px;width:200px;text-align:center;top:976.5px;font-size:10px;line-height:12px;color:#fff;white-space:pre">38M</div>
<div class="lbl mono ct" style="left:1655.5px;width:200px;text-align:center;top:976.5px;font-size:10px;line-height:12px;color:#fff;white-space:pre">40M</div>
<div class="lbl mono ct" style="left:1689.5px;width:200px;text-align:center;top:976.5px;font-size:10px;line-height:12px;color:#fff;white-space:pre">42M</div>
<div class="lbl mono ct" style="left:1722.5px;width:200px;text-align:center;top:976.5px;font-size:10px;line-height:12px;color:#fff;white-space:pre">44M</div>
<div class="lbl mono ct" style="left:1350.5px;top:553px;font-size:10px;line-height:12px;color:#fff;background:#11151d;white-space:pre">1</div>
<div class="lbl mono ct" style="left:1350.5px;top:711px;font-size:10px;line-height:12px;color:#fff;background:#11151d;white-space:pre">1</div>
<div class="lbl mono ct" style="left:1647px;top:112px;font-size:10px;line-height:12px;color:#fff;background:#11151d;white-space:pre">2</div>
<div class="lbl mono ct" style="left:1646px;top:711px;font-size:10px;line-height:12px;color:#fff;background:#11151d;white-space:pre">2</div>
<div class="lbl mono ct" style="left:1665px;top:121.5px;font-size:10px;line-height:12px;color:#fff;-webkit-text-stroke:0.45px currentColor;white-space:pre">Marker 1, live</div>
<div class="lbl mono ct" style="left:1665px;top:134.5px;font-size:10px;line-height:12px;color:#fff;white-space:pre">Freq    16,725 MHz</div>
<div class="lbl mono ct" style="left:1665px;top:147.5px;font-size:10px;line-height:12px;color:#fff;white-space:pre">Rs      23,81 Ohm</div>
<div class="lbl mono ct" style="left:1665px;top:160.5px;font-size:10px;line-height:12px;color:#fff;white-space:pre">Xs      0,3564 Ohm</div>
<div class="lbl mono ct" style="left:1665px;top:179.5px;font-size:10px;line-height:12px;color:#fff;-webkit-text-stroke:0.45px currentColor;white-space:pre">Marker 2, live</div>
<div class="lbl mono ct" style="left:1665px;top:192.5px;font-size:10px;line-height:12px;color:#fff;white-space:pre">Freq    33,0375 MHz</div>
<div class="lbl mono ct" style="left:1665px;top:205.5px;font-size:10px;line-height:12px;color:#fff;white-space:pre">Rs      90,91 Ohm</div>
<div class="lbl mono ct" style="left:1665px;top:218.5px;font-size:10px;line-height:12px;color:#fff;white-space:pre">Xs      0,3532 Ohm</div>
<div class="btn" style="left:236px;top:1007px;width:31px;height:25px;"><svg class="a" style="left:7px;top:4px" width="17" height="17"><path d="M1 3L2.5 1H6V0H10V1H13.5L15 3Z" fill="#000"/><rect x="1" y="4" width="14" height="1.2" fill="#000"/><rect x="2.6" y="5" width="10.8" height="9.4" fill="#fff"/><path d="M2.6 5V14.4H13.4V5" fill="none" stroke="#000" stroke-width="1.3"/><rect x="5.2" y="5" width="1.1" height="9.5" fill="#000"/><rect x="9.7" y="5" width="1.1" height="9.5" fill="#000"/></svg></div>
<div class="a" style="left:291px;top:1013px;width:1565px;height:13px;background:#e6eaea"></div>
<div class="a" style="left:1823px;top:1015px;width:22px;height:9px;background:#0078d7"></div>
<div class="a" style="left:1844px;top:1008px;width:10px;height:22px;background:#0078d7"></div>
<div class="a" style="left:8px;top:1040px;width:1859px;height:1px;background:#c4c4c4"></div>
<div class="a" style="left:8px;top:1041px;width:1859px;height:18px;background:linear-gradient(#dadada,#d2d2d2)"></div>
<div class="a" style="left:8px;top:1059px;width:1859px;height:10px;background:linear-gradient(#d0d0d0,#c8c8c8)"></div>
<div class="a" style="left:187px;top:1042px;width:1px;height:16px;background:#b8b8b8"></div>
<div class="a" style="left:187px;top:1062px;width:2px;height:7px;background:#9a9a9a"></div>
<div class="a" style="left:337px;top:1042px;width:1px;height:16px;background:#b8b8b8"></div>
<div class="a" style="left:337px;top:1062px;width:2px;height:7px;background:#9a9a9a"></div>
<div class="a" style="left:467px;top:1042px;width:1px;height:16px;background:#b8b8b8"></div>
<div class="a" style="left:467px;top:1062px;width:2px;height:7px;background:#9a9a9a"></div>
<div class="a" style="left:597px;top:1042px;width:1px;height:16px;background:#b8b8b8"></div>
<div class="a" style="left:597px;top:1062px;width:2px;height:7px;background:#9a9a9a"></div>
<div class="a" style="left:727px;top:1042px;width:1px;height:16px;background:#b8b8b8"></div>
<div class="a" style="left:727px;top:1062px;width:2px;height:7px;background:#9a9a9a"></div>
<div class="a" style="left:947px;top:1042px;width:1px;height:16px;background:#b8b8b8"></div>
<div class="a" style="left:947px;top:1062px;width:2px;height:7px;background:#9a9a9a"></div>
<div class="lbl mono" style="left:-53px;width:300px;text-align:center;top:1045px;font-size:10px;line-height:12px;color:#000;white-space:pre">Win-10 (v10.0) ru-RU ','</div>
<div class="lbl mono" style="left:114px;width:300px;text-align:center;top:1045px;font-size:10px;line-height:12px;color:#000;white-space:pre">122 points/sec</div>
<div class="lbl mono" style="left:253px;width:300px;text-align:center;top:1045px;font-size:10px;line-height:12px;color:#000;white-space:pre">Bat 4,120 V</div>
<div class="lbl mono" style="left:384px;width:300px;text-align:center;top:1045px;font-size:10px;line-height:12px;color:#000;white-space:pre">Threshold 280 M</div>
<div class="lbl mono" style="left:514px;width:300px;text-align:center;top:1045px;font-size:10px;line-height:12px;color:#000;white-space:pre">BW 0</div>
<div class="lbl mono" style="left:688px;width:300px;text-align:center;top:1045px;font-size:10px;line-height:12px;color:#000;white-space:pre">NanoVNA-H 1.0.5</div>
<div class="a" style="left:8px;top:1060px;width:1859px;height:9px;;overflow:hidden"><div class="lbl mono" style="left:21px;top:3px;font-size:10px;line-height:12px;white-space:pre">Вс 02 апр 2023 18:18:49</div><div class="lbl mono" style="left:196px;top:3px;font-size:10px;line-height:12px;white-space:pre">Points     0 /   201</div><div class="lbl mono" style="left:369px;top:3px;font-size:10px;line-height:12px;white-space:pre">Seg 2 / 2</div><div class="lbl mono" style="left:490px;top:3px;font-size:10px;line-height:12px;white-space:pre">Hist 0 / 512</div><div class="lbl mono" style="left:636px;top:3px;font-size:10px;line-height:12px;white-space:pre">Scans 0</div></div>
<div class="a" style="left:727px;top:1063px;width:1140px;height:6px;background:#a8a8a8"></div>
<div class="a" style="left:8px;top:1069px;width:179px;height:6px;background:#000"></div>
<div class="a" style="left:187px;top:1069px;width:1440px;height:6px;background:linear-gradient(90deg,#5a2418,#6e3020 12%,#5c2a1e 25%,#73402e 38%,#5e2c1e 50%,#6c3424 63%,#5a2a1c 76%,#70382a 88%,#5e2c1e)"></div>
<div class="a" style="left:1627px;top:1069px;width:240px;height:6px;background:#000"></div></body></html>
